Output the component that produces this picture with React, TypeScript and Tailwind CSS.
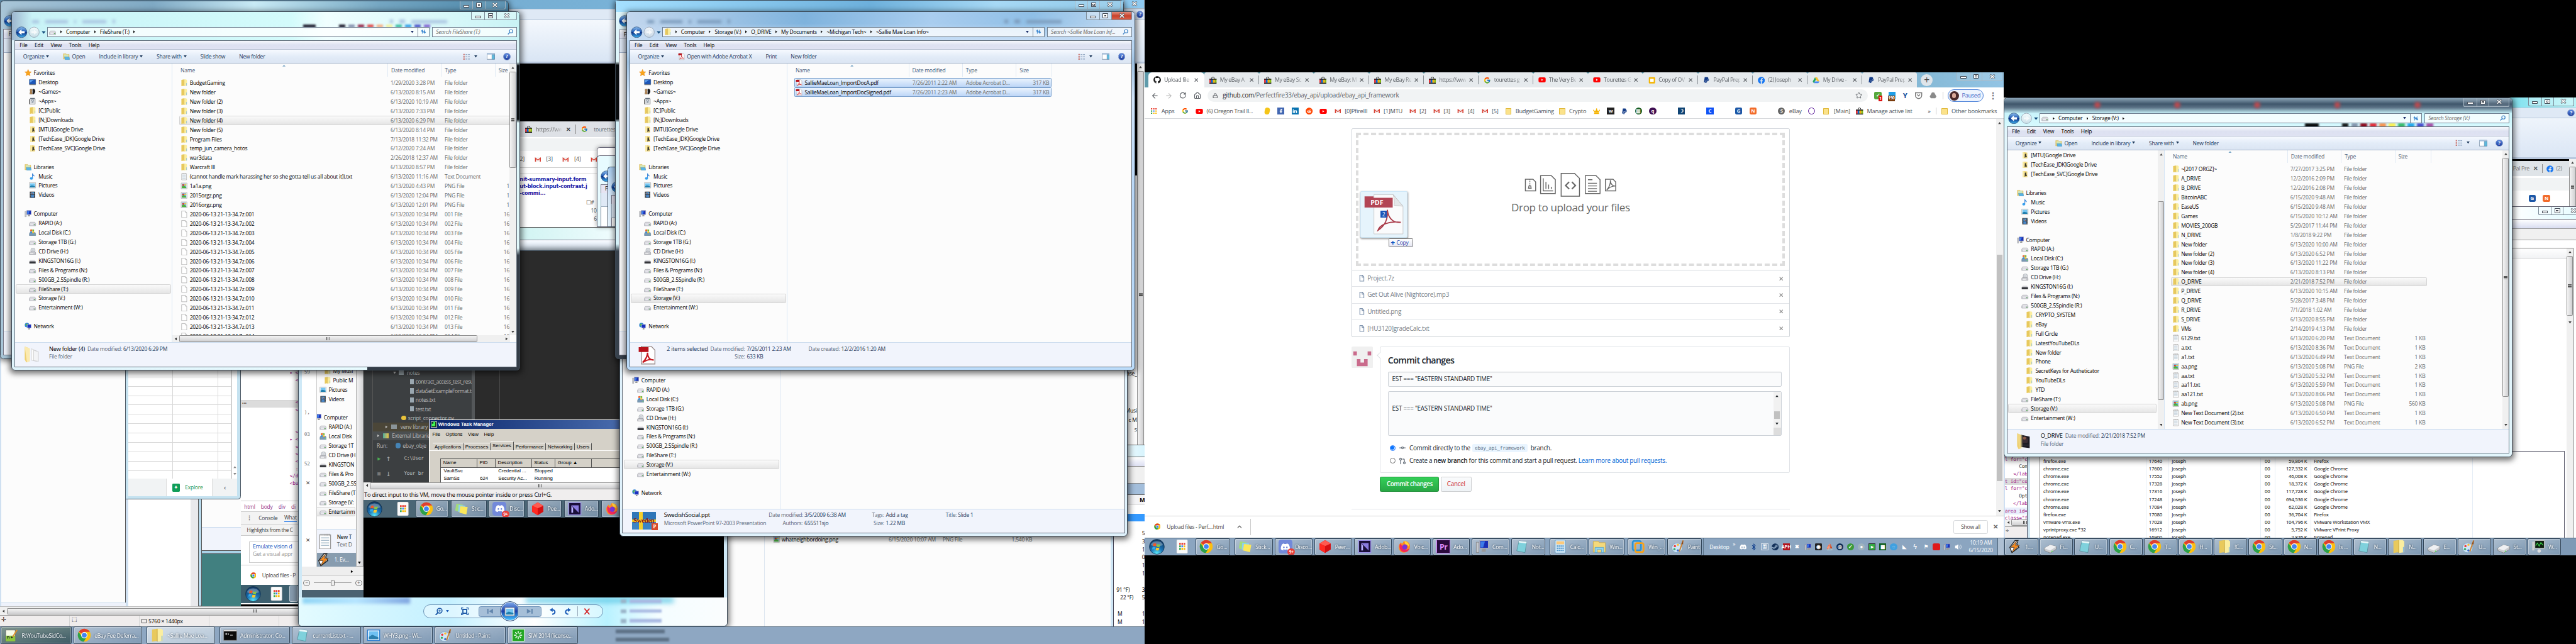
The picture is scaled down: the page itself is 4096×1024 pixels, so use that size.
import type { ReactNode } from "react";
import {
  FaBluetoothB, FaCrown, FaDiscord, FaFacebook, FaFacebookF, FaGithub, FaLinkedinIn,
  FaPaypal, FaReddit, FaSteam, FaYoutube,
} from "react-icons/fa";
import { FcGoogle } from "react-icons/fc";
import { ArrowLeft, ArrowRight, GitCommitHorizontal, GitPullRequest, House, Lock, RotateCw, Star } from "lucide-react";

/* ---------- small icons (16 x 16) ---------- */

type Kind =
  | "folder" | "gdrive" | "drive" | "os" | "cd" | "usb" | "txt" | "png" | "file" | "pdf"
  | "star" | "desktop" | "games" | "apps" | "lib" | "music" | "pics" | "video" | "pc" | "net";

function Svg({ children, className = "size-4" }: { children: ReactNode; className?: string }) {
  return <svg viewBox="0 0 16 16" className={`shrink-0 ${className}`}>{children}</svg>;
}

function Icon({ k, className }: { k: Kind; className?: string }) {
  switch (k) {
    case "folder":
      return <Svg className={className}><path d="M2 1.5 8 .5v14l-6 1z" fill="#e8c95c" /><path d="M8 .5h4.5l2 1.5v12.500l-6 1z" fill="#fbeea0" /><path d="M8 .5v15" stroke="#d2ae3c" strokeWidth=".8" /><path d="M13.500 8.500v6" stroke="#7fb5e0" strokeWidth="1" /></Svg>;
    case "gdrive":
      return <Svg className={className}><path d="M3 1.500h5l5.500 1V15H3z" fill="#efd67a" /><path d="M3 1.500h4v13.500H3z" fill="#f8e9a4" /><path d="M8 5h3v3l2 5-2.500-1-3 2z" fill="#3b3a30" /></Svg>;
    case "drive":
      return <Svg className={className}><path d="M3 6h10l2 3v5H1V9z" fill="#e4e4e8" stroke="#8c8c94" strokeWidth=".8" /><path d="M1.500 9.500h13V14h-13z" fill="#bfc0c8" /><path d="M3 10h7v3H3z" fill="#e8e8ee" /><circle cx="12.500" cy="12" r="1.100" fill="#3fae3a" /></Svg>;
    case "os":
      return <Svg className={className}><path d="M2 8h12l1 3v4H1v-4z" fill="#7899b5" stroke="#56728a" strokeWidth=".7" /><path d="M3 1.500 7 1v4L3 5.500z" fill="#e8602c" /><path d="m7.500 1 4 .5v4l-4-.5z" fill="#78b83a" /><path d="M3 6l4-.4v3.500L3 9.500z" fill="#3a8fd8" /><path d="m7.500 5.600 4 .3v3.600l-4-.4z" fill="#f5c22d" /><circle cx="13" cy="13" r="1" fill="#6cf05a" /></Svg>;
    case "cd":
      return <Svg className={className}><circle cx="9" cy="5.500" r="5" fill="#d9dde2" stroke="#8b8f95" strokeWidth=".7" /><circle cx="9" cy="5.500" r="1.300" fill="#fff" stroke="#8b8f95" strokeWidth=".5" /><path d="M2 9h12l1 2v4H1v-4z" fill="#c6c7cc" stroke="#808088" strokeWidth=".7" /><path d="M3 12h7v1.500H3z" fill="#fff" /></Svg>;
    case "usb":
      return <Svg className={className}><path d="M3 6h10l2 3v5H1V9z" fill="#dcdce0" /><path d="M1 9.500h14V14H1z" fill="#34353a" /><path d="M3 9h10" stroke="#8a8a92" /></Svg>;
    case "txt":
      return <Svg className={className}><path d="M2.500 1.500h11v14h-11z" fill="#fdfdfd" stroke="#9a9a9a" strokeWidth=".8" /><path d="M4 4.500h8M4 7h8M4 9.500h8M4 12h8" stroke="#a9bdcc" strokeWidth="1" /><path d="M4 .5v2M6 .5v2M8 .5v2M10 .5v2M12 .5v2" stroke="#888" strokeWidth=".7" /></Svg>;
    case "png":
      return <Svg className={className}><path d="M1.500 1.500h13v13h-13z" fill="#fff" stroke="#8a8a8a" strokeWidth=".8" /><path d="M3 3h10v10H3z" fill="#6fb6ea" /><path d="M3 9l4-2 6 4v2H3z" fill="#4fae3d" /><circle cx="6" cy="6" r="2" fill="#e5392b" /><path d="M9 4h4v3H9z" fill="#f2d13c" /></Svg>;
    case "file":
      return <Svg className={className}><path d="M2.500.8h8.200L14 4v11.200H2.500z" fill="#fff" stroke="#8c8c8c" strokeWidth=".8" /><path d="M10.500.8V4H14" fill="#eee" stroke="#8c8c8c" strokeWidth=".6" /></Svg>;
    case "pdf":
      return <Svg className={className}><path d="M3 .8h8L14 4v11.200H3z" fill="#fff" stroke="#9a8c8c" strokeWidth=".7" /><path d="M.8 1.500h8v4h-8z" fill="#b8121b" /><path d="M4 14c2-2 4-5 4-8 0 4 2 6 5 6-3-1-6 0-9 2z" fill="none" stroke="#c5161d" strokeWidth="1.100" /></Svg>;
    case "star":
      return <Svg className={className}><path d="m8 .5 2.200 5 5.300.5-4 3.600 1.200 5.400L8 12.200 3.300 15l1.200-5.400L.5 6l5.300-.5z" fill="#f9a41c" stroke="#e27d0b" strokeWidth=".6" /></Svg>;
    case "desktop":
      return <Svg className={className}><path d="M1 2h14v11H1z" fill="#1d56b8" stroke="#24406f" strokeWidth=".8" /><path d="M2 3h9L2 9z" fill="#5da0ee" /><path d="M1 13h14v1.500H1z" fill="#777" /></Svg>;
    case "games":
      return <Svg className={className}><path d="M8 2c4-1 7 2 6 7l-3 5H8z" fill="#1c1c1e" /><path d="M4 2.500a2.200 2.200 0 1 1 2 4l1.500 7H2l1.300-7A2.200 2.200 0 0 1 4 2.500z" fill="#b88a55" stroke="#5a3d20" strokeWidth=".7" /></Svg>;
    case "apps":
      return <Svg className={className}><path d="M2 3h12v12H2z" fill="#dcdfe3" stroke="#777" strokeWidth=".8" /><path d="M3 1h10v2H3z" fill="#5d6a78" /><path d="M5 5h6v7H5z" fill="#8d99a6" /><path d="m5 12 3-6 3 6" fill="none" stroke="#fff" /><path d="M1 4v11" stroke="#333" strokeWidth="1.200" /></Svg>;
    case "lib":
      return <Svg className={className}><path d="M1 2h6l1 1.500h6V14H1z" fill="#efd67a" stroke="#c9a945" strokeWidth=".6" /><path d="M3 4h9v5H3z" fill="#cfe6c0" /><path d="M3.500 9h10.500l1 6H5z" fill="#58b3e6" stroke="#2f87bb" strokeWidth=".6" /></Svg>;
    case "music":
      return <Svg className={className}><path d="M8 1v11" stroke="#1c6fd0" strokeWidth="1.400" /><ellipse cx="5.500" cy="12.300" rx="3.400" ry="2.800" fill="#37a0ee" /><path d="M8 1c.5 3 5 3 4.500 7.500C12 6 9 6 8 5.500z" fill="#2f7fd6" /></Svg>;
    case "pics":
      return <Svg className={className}><path d="M1 2h14v12H1z" fill="#fff" stroke="#8d8d8d" strokeWidth=".8" /><path d="M2.500 3.500h11v9h-11z" fill="#77c6f1" /><path d="m2.500 10 4-2 7 2v2.500h-11z" fill="#1f7fae" /></Svg>;
    case "video":
      return <Svg className={className}><path d="M2 1h12v14H2z" fill="#23262b" /><path d="M4.500 2h7v5.500h-7z" fill="#4f9ad6" /><path d="M4.500 8.500h7V14h-7z" fill="#4b87c6" /><path d="m5 3 5 4" stroke="#c4502f" strokeWidth="1.300" /><path d="M3.200 2v12M12.800 2v12" stroke="#e6e6e6" strokeWidth="1" strokeDasharray="1 1.200" /></Svg>;
    case "pc":
      return <Svg className={className}><path d="M5 1h10v9H5z" fill="#1b2fb5" stroke="#aab" strokeWidth="1" /><path d="M6 2h5l-2 7H6z" fill="#3d7be8" /><path d="M1 3h3v12H1z" fill="#c5c9d0" stroke="#777" strokeWidth=".5" /><path d="M8 10.500h4V14H7z" fill="#999" /></Svg>;
    case "net":
      return <Svg className={className}><circle cx="5.500" cy="5.500" r="5" fill="#2c80d8" /><path d="M2 4c2-3 4-2 5-1S4 6 3 8z" fill="#57b84a" /><path d="M6 4h9v8H6z" fill="#1a2fc0" stroke="#c9ccd4" /><path d="M9 12.500h3V15H8z" fill="#8a8a8a" /></Svg>;
  }
}

/* open folder used in the details panes; the papers inside can be white or a dark picture */
function BigFolder({ dark = false }: { dark?: boolean }) {
  return (
    <svg viewBox="0 0 46 46" className="mt-[3px] ml-[18px] h-[46px] w-[38px] shrink-0">
      <path d="M4 2 14 6v36l-6 3-4-8z" fill="#efd071" />
      {dark ? (
        <><path d="m14 6 24 5v31l-24-3z" fill="#1c1a22" /><path d="M18 12h12l4 8-2 8H20z" fill="#3a2c33" /><circle cx="24" cy="15" r="4" fill="#8a5a4a" /><path d="M16 34h20" stroke="#4a4d58" /></>
      ) : (
        <><path d="m22 8 14 6v28l-14-3z" fill="#fdfdfd" stroke="#bbb" /><path d="m28 12 13 4v26l-13-2z" fill="#f3f4f6" stroke="#bbb" /></>
      )}
      <path d="m4 2 14 5v35l-8 3z" fill={dark ? "#f3dc90" : "#fbeab0"} opacity={dark ? "0.55" : "1"} />
    </svg>
  );
}

function Chrome({ className = "size-8" }: { className?: string }) {
  return (
    <svg viewBox="0 0 32 32" className={`shrink-0 ${className}`}>
      <circle cx="16" cy="16" r="15" fill="#fbbf12" />
      <path d="M16 16 3.500 8A15 15 0 0 1 29 8.500H16z" fill="#df3e30" />
      <path d="M3 8.500A15 15 0 0 0 15 31l7-12-6-3-6 3z" fill="#2ca14b" />
      <circle cx="16" cy="16" r="7.200" fill="#fff" />
      <circle cx="16" cy="16" r="5.600" fill="#4184f3" />
    </svg>
  );
}

function Ebay() {
  return (
    <svg viewBox="0 0 16 16" className="size-4 shrink-0">
      <path d="M5 5V3.500a3 2.800 0 0 1 6 0V5" fill="none" stroke="#111" strokeWidth="1.200" />
      <path d="M0 4.500h16V7H0zM0 13h16v2.500H0z" fill="#111" />
      <path d="M0 6.500h4v7H0z" fill="#e53238" /><path d="M4 6.500h4v7H4z" fill="#0064d2" /><path d="M8 6.500h4v7H8z" fill="#f5af02" /><path d="M12 6.500h4v7h-4z" fill="#86b817" />
    </svg>
  );
}

function Gmail() {
  return <svg viewBox="0 0 16 16" className="size-[15px] shrink-0"><path d="M1 3h14v10.500H1z" fill="#f4f4f4" /><path d="M1 13.500V3l7 5.500L15 3v10.500h-2.500V7.500L8 11 3.500 7.500v6z" fill="#d94235" /></svg>;
}

function GDrive() {
  return <svg viewBox="0 0 16 16" className="size-4 shrink-0"><path d="M5.500 1.500h5l5 9h-5z" fill="#fbc02d" /><path d="m5.500 1.500 2.500 4.500-5 8.500-2.500-4z" fill="#1fa463" /><path d="M5.500 10.500h10l-2.500 4H3z" fill="#4688f4" /></svg>;
}

function Slides() {
  return <svg viewBox="0 0 16 16" className="size-4 shrink-0"><rect x="1" y="1" width="14" height="14" rx="1.500" fill="#f4b400" /><path d="M4 4.500h8v7H4z" fill="#fff" /></svg>;
}

function Tri({ className = "" }: { className?: string }) {
  return <svg viewBox="0 0 8 6" className={`h-[5px] w-[7px] shrink-0 ${className}`}><path d="M0 0h8L4 6z" fill="currentColor" /></svg>;
}

function Crumb() {
  return <svg viewBox="0 0 5 8" className="h-[7px] w-[4px] shrink-0"><path d="m0 0 5 4-5 4z" fill="#111" /></svg>;
}

function Orb({ className = "size-[35px]" }: { className?: string }) {
  return (
    <svg viewBox="0 0 36 36" className={`shrink-0 ${className}`}>
      <defs><radialGradient id="orb" cx=".5" cy=".95" r=".9"><stop offset="0" stopColor="#5ff0ff" /><stop offset=".45" stopColor="#1b72b4" /><stop offset="1" stopColor="#143a63" /></radialGradient></defs>
      <circle cx="18" cy="18" r="17.200" fill="url(#orb)" stroke="#0f2a45" />
      <path d="M4 14a14.500 12 0 0 1 28 0c-8 3-20 3-28 0z" fill="#fff" opacity=".3" />
      <path d="M10 11c3-1.600 5-1.400 7 .2l-1.500 6c-2-1.400-4-1.600-6.800-.2z" fill="#f0592a" />
      <path d="M18.500 11.800c2.500 1.400 5 1.400 7.500.2l-1.600 6c-2.600 1.200-4.800 1-7.200-.3z" fill="#8cc63e" />
      <path d="M8.300 18.500c2.600-1.300 4.800-1.200 6.800.2l-1.500 6c-2-1.400-4.200-1.500-6.800-.3z" fill="#35a8e8" />
      <path d="M16.700 19.400c2.400 1.300 4.800 1.400 7.300.2l-1.600 6c-2.500 1.200-4.900 1-7.200-.2z" fill="#fdc72e" />
    </svg>
  );
}

/* ---------- window chrome ---------- */

function Caption({ tone = "light", className = "" }: { tone?: "light" | "red" | "dark"; className?: string }) {
  const line = tone === "dark" ? "border-[#a9b8c4]" : "border-[#7d8c99]";
  const body = tone === "light" ? "bg-white/25" : tone === "dark" ? "bg-white/10" : "bg-white/30";
  return (
    <div className={`flex h-[19px] w-[103px] shrink-0 overflow-hidden rounded-b-[4px] border border-t-0 ${line} ${body} ${className}`}>
      <div className={`flex w-[29px] items-center justify-center border-r ${line}`}>
        <i className="mt-[5px] h-[5px] w-[13px] rounded-[1px] border border-[#444b55] bg-white" />
      </div>
      <div className={`flex w-[27px] items-center justify-center border-r ${line}`}>
        <i className="flex h-[10px] w-[12px] items-center justify-center rounded-[1px] border border-[#444b55] bg-white"><b className="h-[4px] w-[5px] border border-[#444b55]" /></i>
      </div>
      <div className={`flex flex-1 items-center justify-center ${tone === "red" ? "bg-linear-to-b from-[#e08f80] via-[#c9412b] to-[#d8604a]" : ""}`}>
        <svg viewBox="0 0 14 11" className="h-[11px] w-[14px]"><path d="m2 1 10 9M12 1 2 10" stroke="#444b55" strokeWidth="4" /><path d="m2.500 1.500 9 8M11.500 1.500l-9 8" stroke="#fff" strokeWidth="2.200" /></svg>
      </div>
    </div>
  );
}

function BackForward() {
  return (
    <svg viewBox="0 0 70 26" className="h-[26px] w-[70px] shrink-0">
      <defs>
        <linearGradient id="bk" x1="0" y1="0" x2="0" y2="1"><stop offset="0" stopColor="#8fc0f0" /><stop offset=".48" stopColor="#1b55b0" /><stop offset=".52" stopColor="#0a2f86" /><stop offset="1" stopColor="#3fb5f2" /></linearGradient>
        <linearGradient id="fw" x1="0" y1="0" x2="0" y2="1"><stop offset="0" stopColor="#fff" stopOpacity=".8" /><stop offset="1" stopColor="#c9d6e0" stopOpacity=".7" /></linearGradient>
      </defs>
      <circle cx="13" cy="13" r="12" fill="url(#bk)" stroke="#2a4b78" />
      <path d="m6 13 7-6.500v4h7v5h-7v4z" fill="#fff" />
      <circle cx="41" cy="13" r="11.500" fill="url(#fw)" stroke="#8796a6" />
      <path d="m48 13-7-5.500v3.500h-6v4h6v3.500z" fill="#fff" opacity=".7" />
      <path d="M58 11h9l-4.500 5.500z" fill="#16507f" />
    </svg>
  );
}

/* address bar of the window behind, seen through the glass */
function GhostBar({ className = "" }: { className?: string }) {
  return (
    <div className={`flex items-center gap-[14px] blur-[3px] ${className}`}>
      <i className="h-[7px] w-[16px] bg-current" /><i className="h-[7px] w-[50px] bg-current" /><i className="h-[7px] w-[5px] bg-current" /><i className="h-[7px] w-[54px] bg-current" /><i className="h-[8px] w-[5px] bg-current" />
      <i className="ml-[600px] h-[8px] w-[8px] bg-current" /><i className="h-[9px] w-[12px] bg-current" /><i className="h-[7px] w-[80px] bg-current" />
    </div>
  );
}

type NavItem = [Kind, string, 0 | 1 | 2] | null;

const favorites: NavItem[] = [
  ["star", "Favorites", 0], ["desktop", "Desktop", 1], ["games", "~Games~", 1], ["apps", "~Apps~", 1],
  ["folder", "[C;]Public", 1], ["folder", "[N;]Downloads", 1],
];
const drivesFolders: NavItem[] = [
  ["gdrive", "[MTU]Google Drive", 1], ["gdrive", "[TechEase_JDK]Google Drive", 1], ["gdrive", "[TechEase_SVC]Google Drive", 1],
];
const libraries: NavItem[] = [["lib", "Libraries", 0], ["music", "Music", 1], ["pics", "Pictures", 1], ["video", "Videos", 1]];
const computer: NavItem[] = [
  ["pc", "Computer", 0], ["drive", "RAPID (A:)", 1], ["os", "Local Disk (C:)", 1], ["drive", "Storage 1TB (G:)", 1],
  ["cd", "CD Drive (H:)", 1], ["usb", "KINGSTON16G (I:)", 1], ["drive", "Files & Programs (N:)", 1], ["drive", "500GB_2.5Spindle (R:)", 1],
];
const tail: NavItem[] = [["drive", "FileShare (T:)", 1], ["drive", "Storage (V:)", 1], ["drive", "Entertainment (W:)", 1]];
const network: NavItem[] = [null, ["net", "Network", 0]];
const fullNav: NavItem[] = [...favorites, ...drivesFolders, null, ...libraries, null, ...computer, ...tail, ...network];
const subfolders: NavItem[] = ["CRYPTO_SYSTEM", "eBay", "Full Circle", "LatestYouTubeDLs", "New folder", "Phone", "SecretKeys for Autheticator", "YouTubeDLs", "YTD"].map((n) => ["folder", n, 2]);
const deepNav: NavItem[] = [...drivesFolders, null, ...libraries, null, ...computer, ...subfolders, ...tail];

function NavList({ items, selected }: { items: NavItem[]; selected: string }) {
  return (
    <ul className="flex flex-col">
      {items.map((it, i) =>
        it === null ? <li key={i} className="h-[21px]" /> : (
          <li key={i} className={`mx-[2px] flex h-[21px] shrink-0 items-center gap-[5px] rounded-[3px] border ${it[1] === selected ? "border-[#d5d5d5] bg-linear-to-b from-[#fafafa] to-[#e5e5e5]" : "border-transparent"} ${it[2] === 0 ? "pl-[17px]" : it[2] === 1 ? "pl-[28px]" : "pl-[38px]"}`}>
            <Icon k={it[0]} /><span>{it[1]}</span>
          </li>
        ),
      )}
    </ul>
  );
}

function Menu() {
  return (
    <div className="flex h-[21px] shrink-0 items-center gap-[16px] border-b border-[#b3bccf] bg-linear-to-b from-[#f6f8fc] via-[#dde1f1] to-[#dfe2f2] pl-[10px]">
      {["File", "Edit", "View", "Tools", "Help"].map((m) => <span key={m}>{m}</span>)}
    </div>
  );
}

function HelpDot({ className = "size-[16px]" }: { className?: string }) {
  return <span className={`flex shrink-0 items-center justify-center rounded-full border border-[#7c94c8] bg-linear-to-b from-[#5a87e0] to-[#1c3b9c] text-[11px] font-bold text-white ${className}`}>?</span>;
}

function Toolbar({ children }: { children: ReactNode }) {
  return (
    <div className="flex h-[31px] shrink-0 items-center border-b border-[#a4b4cb] bg-linear-to-b from-[#f7faff] via-[#e3ecf8] to-[#dbe5f3] pr-[14px] pl-[18px] text-[#1e395b]">
      <div className="flex flex-1 items-center">{children}</div>
      <svg viewBox="0 0 18 14" className="mr-[7px] h-[14px] w-[18px]"><path d="M1 1h3v3H1zM1 6h3v3H1zM1 11h3v3H1z" fill="#c9706a" /><path d="M6 2.500h4m1.500 0h4M6 7.500h4m1.500 0h4M6 12.500h4m1.500 0h4" stroke="#5e7ba0" strokeWidth="1.200" /></svg>
      <Tri className="mr-[21px]" />
      <svg viewBox="0 0 18 16" className="mr-[19px] h-[16px] w-[18px]"><path d="M.5 1.500h17v13H.5z" fill="#fff" stroke="#5b7896" /><path d="M.5 1h17v3H.5z" fill="#a6c0dc" /><path d="M11.500 4h6v10.500h-6z" fill="#5db9dd" stroke="#5b7896" strokeWidth=".6" /></svg>
      <HelpDot />
    </div>
  );
}

function VScroll({ thumb, className = "" }: { thumb: string; className?: string }) {
  return (
    <div className={`flex w-[15px] shrink-0 flex-col items-center bg-[#f0f0f0] ${className}`}>
      <Tri className="mt-[6px] mb-[6px] rotate-180 text-[#444]" />
      <div className={`flex w-[15px] flex-col items-center justify-center gap-[1px] rounded-[2px] border border-[#8e8e8e] bg-linear-to-r from-[#f4f4f4] to-[#cfcfd1] ${thumb}`}>
        <i className="h-px w-[8px] bg-[#555]" /><i className="h-px w-[8px] bg-[#555]" /><i className="h-px w-[8px] bg-[#555]" /><i className="h-px w-[8px] bg-[#555]" />
      </div>
      <div className="flex-1" />
      <Tri className="mb-[6px] text-[#444]" />
    </div>
  );
}

function HScroll({ thumb }: { thumb: string }) {
  return (
    <div className="flex h-[15px] shrink-0 items-center bg-[#f0f0f0] px-[4px]">
      <Tri className="mr-[4px] rotate-90 text-[#333]" />
      <div className={`flex h-[15px] items-center justify-center gap-[2px] rounded-[2px] border border-[#8e8e8e] bg-linear-to-b from-[#f4f4f4] to-[#cfcfd1] ${thumb}`}>
        <i className="h-[7px] w-px bg-[#555]" /><i className="h-[7px] w-px bg-[#555]" /><i className="h-[7px] w-px bg-[#555]" />
      </div>
      <div className="flex-1" />
      <Tri className="-rotate-90 text-[#333]" />
    </div>
  );
}

type FileRow = [Kind, string, string, string, string?];

function FileList({ rows, cols, head, selected, tone = "grey", widths }: {
  rows: FileRow[]; cols: string; head: string; selected: string[]; tone?: "grey" | "blue"; widths: string;
}) {
  const pick = tone === "blue" ? "border-[#7da2ce] bg-linear-to-b from-[#eaf3fd] to-[#bdd6f7]" : "border-[#d5d5d5] bg-linear-to-b from-[#fafafa] to-[#e5e5e5]";
  return (
    <div className="flex min-w-0 flex-1 flex-col overflow-hidden">
      <div className={`relative grid h-[29px] shrink-0 text-[#4c607a] ${head}`}>
        {["Name", "Date modified", "Type", "Size"].map((h) => (
          <div key={h} className="relative flex items-center border-r border-[#e1eaf4] pl-[7px]">
            {h}
            {h === "Name" && <i className="absolute top-[2px] left-1/2 h-[4px] w-[7px] bg-[#7fa9c8] [clip-path:polygon(50%_0,100%_100%,0_100%)]" />}
          </div>
        ))}
      </div>
      <div className={`mt-[3px] flex min-h-0 flex-1 flex-col overflow-hidden ${widths}`}>
        {rows.map((r, i) => (
          <div key={i} className={`grid h-[21px] shrink-0 items-center rounded-[2px] border ${selected.includes(r[1]) ? pick : "border-transparent"} ${cols}`}>
            <span className="flex items-center gap-[4px] pl-[2px]"><Icon k={r[0]} />{r[1]}</span>
            <span className="text-[#6d6d6d]">{r[2]}</span>
            <span className="text-[#6d6d6d]">{r[3]}</span>
            <span className="pr-[4px] text-right text-[#6d6d6d]">{r[4]}</span>
          </div>
        ))}
      </div>
    </div>
  );
}

function Explorer({ className, caption, back, crumbs, drive, search, searchW, tools, nav, body, details }: {
  className: string; caption?: "light" | "red" | "dark"; back?: ReactNode; crumbs: string[]; drive: Kind; search: string; searchW: string;
  tools: ReactNode; nav: ReactNode; body: ReactNode; details: ReactNode;
}) {
  return (
    <section className={`absolute flex flex-col overflow-hidden rounded-[8px] border border-[#3a4652] px-[5px] pb-[6px] shadow-[0_3px_14px_3px_rgba(0,0,0,0.55)] ${className}`}>
      {back}
      <div className="relative flex h-[19px] shrink-0 justify-end"><Caption tone={caption} /></div>
      <div className="relative mt-[13px] flex h-[26px] shrink-0 items-center pl-[3px]">
        <BackForward />
        <div className="flex h-[22px] flex-1 items-center gap-[9px] border border-[#6f7f90] bg-white/75 pl-[3px]">
          <Icon k={drive} />
          <Crumb />
          {crumbs.map((c) => (
            <span key={c} className="flex items-center gap-[9px]"><span>{c}</span>{(c !== crumbs[crumbs.length - 1] || drive === "drive") && <Crumb />}</span>
          ))}
          <div className="flex-1" />
          <Tri className="text-[#1c2f6a]" />
          <div className="flex h-full w-[25px] items-center justify-center border-l border-[#6f7f90]">
            <svg viewBox="0 0 16 16" className="size-[15px]"><path d="M5 13V7h3M2.500 7 5 3.500 7.500 7zM11 3v6H8M8.500 9l2.500 3.500L13.500 9z" fill="#3a86d0" stroke="#3a86d0" strokeWidth="1" /></svg>
          </div>
        </div>
        <div className={`ml-[6px] flex h-[22px] items-center justify-between border border-[#6f7f90] bg-white/75 px-[7px] text-[#6a6a6a] italic ${searchW}`}>
          {search}
          <svg viewBox="0 0 14 14" className="size-[13px]"><circle cx="8.500" cy="5.500" r="4" fill="none" stroke="#3f82c4" strokeWidth="1.800" /><path d="M5.500 8.500 1 13" stroke="#3f82c4" strokeWidth="2" /></svg>
        </div>
      </div>
      <div className="relative mt-[5px] flex min-h-0 flex-1 flex-col border border-[#5f6b78] bg-[#fcfcfc]">
        <Menu />
        <Toolbar>{tools}</Toolbar>
        <div className="flex min-h-0 flex-1">{nav}{body}</div>
        <div className="flex h-[54px] shrink-0 border-t-2 border-[#cbdcee] bg-[#f1f4fc]">{details}</div>
      </div>
    </section>
  );
}

function Tool({ children, className = "mr-[31px]" }: { children: ReactNode; className?: string }) {
  return <span className={`flex items-center gap-[4px] ${className}`}>{children}</span>;
}

const fileShareRows: FileRow[] = [
  ["folder", "BudgetGaming", "1/29/2020 3:28 PM", "File folder"],
  ["folder", "New folder", "6/13/2020 8:15 AM", "File folder"],
  ["folder", "New folder (2)", "6/13/2020 10:19 AM", "File folder"],
  ["folder", "New folder (3)", "6/13/2020 7:33 PM", "File folder"],
  ["folder", "New folder (4)", "6/13/2020 6:29 PM", "File folder"],
  ["folder", "New folder (5)", "6/13/2020 8:14 PM", "File folder"],
  ["folder", "Program Files", "7/13/2018 11:32 PM", "File folder"],
  ["folder", "temp_jun_camera_hotos", "6/12/2020 7:24 AM", "File folder"],
  ["folder", "war3data", "2/26/2018 12:37 AM", "File folder"],
  ["folder", "Warcraft III", "6/13/2020 8:57 PM", "File folder"],
  ["txt", "(cannot handle mark harassing her so she gotta tell us all about it)).txt", "6/13/2020 11:16 AM", "Text Document"],
  ["png", "1a1a.png", "6/13/2020 4:43 PM", "PNG File", "1"],
  ["png", "2015orgz.png", "6/13/2020 12:04 PM", "PNG File", "1"],
  ["png", "2016orgz.png", "6/13/2020 12:01 PM", "PNG File", "1"],
  ...Array.from({ length: 14 }, (_, i): FileRow => {
    const n = String(i + 1).padStart(3, "0");
    return ["file", `2020-06-13 21-13-34.7z.${n}`, "6/13/2020 10:34 PM", `${n} File`, "16"];
  }),
];

const storageRows: FileRow[] = [
  ["folder", "~[2017 ORGZ]~", "7/27/2017 3:25 PM", "File folder"],
  ["folder", "A_DRIVE", "12/2/2016 2:09 PM", "File folder"],
  ["folder", "B_DRIVE", "12/2/2016 2:08 PM", "File folder"],
  ["folder", "BitcoinABC", "6/15/2020 9:48 AM", "File folder"],
  ["folder", "EaseUS", "6/15/2020 9:48 AM", "File folder"],
  ["folder", "Games", "6/15/2020 10:12 AM", "File folder"],
  ["folder", "MOVIES_200GB", "5/29/2017 11:44 PM", "File folder"],
  ["folder", "N_DRIVE", "1/8/2018 9:22 PM", "File folder"],
  ["folder", "New folder", "6/13/2020 10:00 AM", "File folder"],
  ["folder", "New folder (2)", "6/13/2020 6:52 PM", "File folder"],
  ["folder", "New folder (3)", "6/13/2020 11:22 PM", "File folder"],
  ["folder", "New folder (4)", "6/13/2020 8:13 PM", "File folder"],
  ["folder", "O_DRIVE", "2/21/2018 7:52 PM", "File folder"],
  ["folder", "P_DRIVE", "6/13/2020 10:15 AM", "File folder"],
  ["folder", "Q_DRIVE", "5/28/2017 3:48 PM", "File folder"],
  ["folder", "R_DRIVE", "7/1/2018 1:02 AM", "File folder"],
  ["folder", "S_DRIVE", "6/13/2020 8:55 PM", "File folder"],
  ["folder", "VMs", "2/14/2019 4:13 PM", "File folder"],
  ["txt", "6129.txt", "6/13/2020 6:20 PM", "Text Document", "1 KB"],
  ["txt", "a.txt", "6/13/2020 8:36 PM", "Text Document", "1 KB"],
  ["txt", "a1.txt", "6/13/2020 6:49 PM", "Text Document", "1 KB"],
  ["png", "aa.png", "6/13/2020 5:08 PM", "PNG File", "2 KB"],
  ["txt", "aa.txt", "6/13/2020 5:32 PM", "Text Document", "1 KB"],
  ["txt", "aa11.txt", "6/13/2020 5:59 PM", "Text Document", "1 KB"],
  ["txt", "aa121.txt", "6/13/2020 8:06 PM", "Text Document", "1 KB"],
  ["png", "ab.png", "6/13/2020 5:08 PM", "PNG File", "560 KB"],
  ["txt", "New Text Document (2).txt", "6/13/2020 6:50 PM", "Text Document", "1 KB"],
  ["txt", "New Text Document (3).txt", "6/13/2020 6:52 PM", "Text Document", "1 KB"],
];

/* ---------- taskbar ---------- */

type App =
  | "npp" | "chrome" | "folder" | "cmd" | "notepad" | "photo" | "paint" | "siw" | "sticky" | "discord" | "gem"
  | "media" | "firefox" | "pr" | "pc" | "calc" | "files" | "vmware" | "winamp" | "drive" | "taskmgr";

function AppIcon({ a }: { a: App }) {
  const c = "size-[31px] shrink-0";
  switch (a) {
    case "chrome": return <Chrome className={c} />;
    case "folder": return <Icon k="folder" className={c} />;
    case "pc": return <Icon k="pc" className={c} />;
    case "npp": return <svg viewBox="0 0 32 32" className={c}><path d="M3 4h22v26H3z" fill="#f7fbe8" stroke="#555" /><path d="M3 17h22v13H3z" fill="#8cc63f" /><path d="M29 4 19 20" stroke="#e0902a" strokeWidth="3" /><path d="M7 24v-6m0 2c3-3 4 0 4 4m4-3h4m-2-2v4" stroke="#222" strokeWidth="1.500" fill="none" /></svg>;
    case "cmd": return <svg viewBox="0 0 32 32" className={c}><path d="M1 4h30v24H1z" fill="#0a0a0a" stroke="#999" /><path d="M1 4h30v3H1z" fill="#dcdcdc" /><path d="M5 12h4M5 15h4m3-3v3m4 1h6" stroke="#eee" strokeWidth="1.600" /></svg>;
    case "notepad": return <svg viewBox="0 0 32 32" className={c}><path d="m9 3 18 2-4 25L4 26z" fill="#7fd1dc" stroke="#4a8690" /><path d="m9 3 18 2-.8 4L8.200 6.500z" fill="#e9f6f8" /></svg>;
    case "photo": return <svg viewBox="0 0 32 32" className={c}><path d="M2 4h28v24H2z" fill="#fff" stroke="#2f7fd0" strokeWidth="2" /><path d="M5 7h22v18H5z" fill="#6fc1f3" /><path d="m5 20 8-5 14 6v4H5z" fill="#2b7fae" /></svg>;
    case "paint": return <svg viewBox="0 0 32 32" className={c}><ellipse cx="14" cy="19" rx="12" ry="11" fill="#cfe5f5" stroke="#6f9dbf" /><circle cx="9" cy="15" r="2.500" fill="#e33" /><circle cx="16" cy="12" r="2.500" fill="#fb3" /><circle cx="8" cy="22" r="2.500" fill="#3a6" /><circle cx="16" cy="25" r="2.500" fill="#36c" /><path d="M28 2 19 28" stroke="#c98338" strokeWidth="3" /><path d="m28 1-4 9 4 1z" fill="#8a4b1f" /></svg>;
    case "siw": return <svg viewBox="0 0 32 32" className={c}><rect x="2" y="2" width="28" height="28" fill="#23a623" stroke="#bfe8bf" strokeWidth="2" /><path d="M16 6v20M6 16h20M9 9l14 14M23 9 9 23" stroke="#fff" strokeWidth="2" strokeDasharray="6 7" /></svg>;
    case "sticky": return <svg viewBox="0 0 32 32" className={c}><path d="m4 4 16 3-4 18L1 20z" fill="#a4dc7a" /><path d="m9 7 16 2-3 18-14-4z" fill="#8cd0f0" /><path d="m13 10 17 2-3 17-16-4z" fill="#fbe75a" /></svg>;
    case "discord": return <span className={`relative flex items-center justify-center rounded-[6px] bg-[#7289da] text-white ${c}`}><FaDiscord size={22} /><b className="absolute -right-[6px] -bottom-[4px] flex size-[16px] items-center justify-center rounded-full bg-[#e8413c] text-[9px]">9+</b></span>;
    case "gem": return <svg viewBox="0 0 32 32" className={c}><path d="m16 1 13 8v14l-13 8L3 23V9z" fill="#d40f12" /><path d="m16 1 13 8-13 6L3 9z" fill="#ff5a50" /><path d="M16 15v16L3 23V9z" fill="#ff2a22" /></svg>;
    case "media": return <svg viewBox="0 0 32 32" className={c}><path d="M2 2h28v28H2z" fill="#1a0f3a" stroke="#9b8fe6" strokeWidth="2" /><path d="M8 8h17v17z" fill="#8a7be0" /><path d="M8 8v17h4V14z" fill="#b9b0ff" /></svg>;
    case "firefox": return <svg viewBox="0 0 32 32" className={c}><path d="M16 3c9 1 14 7 13 14S22 30 15 30 2 25 3 15c1-4 3-6 5-9 1 2 2 3 4 3 1-3 2-5 4-6z" fill="#ff8a1f" /><path d="M6 9c-3 8 0 19 10 20 6 0 11-4 12-9-3 4-16 5-16-4z" fill="#f5265c" /><circle cx="17" cy="17" r="6" fill="#7a35d8" /><path d="M16 3c8 2 12 7 10 13-2-4-5-4-8-6z" fill="#ffd43a" /></svg>;
    case "pr": return <span className={`flex items-center justify-center rounded-[2px] border-2 border-[#d873ff] bg-[#2a0a3c] text-[17px] font-bold text-[#e38cff] ${c}`}>Pr</span>;
    case "calc": return <svg viewBox="0 0 32 32" className={c}><rect x="4" y="1" width="24" height="30" rx="2" fill="#cfe6f6" stroke="#4c8bb8" /><path d="M7 4h18v7H7z" fill="#fdc97a" /><path d="M8 15h16M8 20h16M8 25h16" stroke="#4b93c8" strokeWidth="3" strokeDasharray="3 1.300" /></svg>;
    case "files": return <svg viewBox="0 0 32 32" className={c}><path d="M2 4h12l2 3h14v22H2z" fill="#f4d97b" stroke="#c8a23f" /><path d="M6 18h20v12h-5v-7H11v7H6z" fill="#8fd4f2" stroke="#4b9cc8" /></svg>;
    case "vmware": return <svg viewBox="0 0 32 32" className={c}><rect x="3" y="3" width="19" height="22" rx="4" fill="none" stroke="#2b94d8" strokeWidth="4" /><rect x="9" y="8" width="19" height="21" rx="4" fill="none" stroke="#f7a11a" strokeWidth="4" /></svg>;
    case "winamp": return <svg viewBox="0 0 32 32" className={c}><path d="M16 2 4 18l5 12 16-12-5-8 3-8z" fill="#fff" stroke="#222" strokeWidth="2" /><path d="M20 2 6 18h8L9 30l17-17h-9z" fill="#f58a1f" stroke="#222" /></svg>;
    case "drive": return <svg viewBox="0 0 32 32" className={c}><path d="m2 20 14-8 14 4v6l-14 9-14-6z" fill="#c9ccd0" stroke="#777" /><path d="m2 20 14-8 14 4-14 9z" fill="#eff0f2" /><circle cx="20" cy="27" r="1.500" fill="#5e5" /></svg>;
    case "taskmgr": return <svg viewBox="0 0 32 32" className={c}><path d="M8 2h22v18H8z" fill="#0f1f10" stroke="#bbb" strokeWidth="2" /><path d="m10 14 4-6 4 7 4-8 5 6" fill="none" stroke="#3be04a" strokeWidth="1.600" /><path d="M2 5h5v20H2z" fill="#d0d0d0" /><circle cx="18" cy="26" r="4" fill="#ddd" /></svg>;
  }
}

type Task = { a: App; t: string; w: string; on?: "lit" | "dark" };

function TaskButton({ a, t, w, on }: Task) {
  const tone = on === "lit" ? "from-[#d5dfe9] to-[#b3c5d6]" : on === "dark" ? "from-[#7f9690] to-[#3f5c66]" : "from-[#b9c7d6]/80 to-[#7d97b1]/80";
  return (
    <div className={`flex h-[39px] shrink-0 items-center gap-[7px] overflow-hidden rounded-[3px] border border-[#32465a] bg-linear-to-br pl-[7px] text-white shadow-[inset_0_0_0_1px_rgba(255,255,255,0.45)] ${tone} ${w}`}>
      <AppIcon a={a} /><span className="drop-shadow-[0_0_2px_#234]">{t}</span>
    </div>
  );
}

function AppsGrid({ className = "size-[30px]" }: { className?: string }) {
  return (
    <svg viewBox="0 0 30 38" className={`shrink-0 ${className}`}>
      <rect x="0" y="0" width="30" height="38" rx="3" fill="#fafafa" stroke="#bbb" />
      {["#ea4335", "#ea4335", "#ea4335", "#34a853", "#4285f4", "#fbbc05", "#34a853", "#fbbc05", "#fbbc05"].map((c, i) => (
        <rect key={i} x={7 + (i % 3) * 6} y={9 + Math.floor(i / 3) * 7} width="4.500" height="5" fill={c} />
      ))}
    </svg>
  );
}

/* ---------- left monitor, rear windows ---------- */

const code = "font-['DejaVu_Sans_Mono',monospace] text-[11px] tracking-[-0.3px]";

function SheetWindow() {
  return (
    <div className="absolute top-[800px] left-[280px] flex h-[316px] w-[259px] flex-col rounded-br-[6px] border border-[#4d5964] bg-[#c5e2f0] pr-[7px] pb-[5px] pl-[6px]">
      <div className="flex min-h-0 flex-1 bg-white">
        <div className="grid flex-1 grid-cols-[100px_101px_1fr] border-r border-[#ccc]">
          {Array.from({ length: 39 }, (_, i) => <div key={i} className="h-[21px] border-r border-b border-[#d8d8d8]" />)}
        </div>
        <div className="flex w-[12px] flex-col items-center justify-end gap-[11px] pb-[8px] text-[#888]"><Tri className="rotate-180" /><Tri /></div>
      </div>
      <div className="flex h-[39px] shrink-0 items-stretch bg-[#f1f3f4]">
        <div className="w-[84px]" />
        <div className="flex w-[104px] items-center gap-[12px] border-x border-[#ddd] bg-white pl-[12px] text-[#1a9450]">
          <span className="flex h-[18px] w-[17px] items-center justify-center rounded-[2px] bg-[#0f9d58] text-[13px] text-white">✦</span>Explore
        </div>
        <div className="flex flex-1 items-center justify-center text-[16px] text-[#555]">‹</div>
      </div>
    </div>
  );
}

function DomPanel() {
  const lines = ["▸ <", "  <", "", "", "  <", "  <", "", "", "  <", "▸ <", "  <", "  <", "  <", "  :", "</d", "<bu"];
  return (
    <div className="absolute top-[800px] left-[539px] flex h-[556px] w-[128px] flex-col overflow-hidden bg-white">
      <div className="mt-[94px] h-[17px] shrink-0 border-y border-[#d5d5d5] bg-[#dcdcdc] pl-[2px] text-[10px] leading-[12px] text-[#555]">•••</div>
      <div className={`absolute top-[26px] right-0 flex flex-col text-right text-[#a0208a] ${code}`}>
        {lines.map((l, i) => <span key={i} className="h-[16.500px] whitespace-pre">{l}</span>)}
      </div>
      <div className="mt-[209px] flex h-[24px] shrink-0 items-center gap-[13px] border-t border-[#ccc] pl-[7px] text-[#8f2f8a]"><span>html</span><span>body</span><span>div</span><span>di</span></div>
      <div className="flex h-[27px] shrink-0 items-center gap-[15px] border-t border-[#ccc] bg-[#f3f3f3] pl-[12px] text-[#444]"><b>⋮</b><span>Console</span><span className="border-b-2 border-[#1a73e8] pb-[2px]">What</span></div>
      <div className="flex h-[27px] shrink-0 items-center border-y border-[#ccc] bg-[#f3f3f3] pl-[13px] text-[11.500px] tracking-[-0.500px] text-[#333]">Highlights from the C</div>
      <div className="mt-[13px] ml-[18px] h-[47px] shrink-0 border border-r-0 border-[#ccc] pl-[7px]">
        <p className="mt-[3px] text-[12.500px] tracking-[-0.500px] text-[#1558c0]">Emulate vision d</p><p className="text-[12.500px] tracking-[-0.500px] text-[#999]">Get a visual appr</p>
      </div>
      <div className="mt-[5px] flex flex-1 items-center gap-[13px] border-t border-[#ccc] pl-[20px] tracking-[-0.500px] text-[#444]"><Chrome className="size-[14px]" />Upload files - P</div>
      <div className="mb-[4px] flex h-[40px] shrink-0 items-center gap-[21px] bg-[#3d5f6e] pl-[9px]"><Orb /><AppsGrid className="h-[31px] w-[30px]" /><i className="-ml-[8px] h-[37px] w-[20px] rounded-[3px] border border-white/50 bg-[#879caf]" /></div>
      <div className="h-[4px] shrink-0 bg-black" />
    </div>
  );
}

function TaskManager() {
  return (
    <div className={`absolute top-[217px] left-[146px] flex h-[140px] w-[660px] flex-col border-t border-l border-white bg-[#d5d1c8] font-['Liberation_Sans',sans-serif] text-[11px] tracking-normal text-black`}>
      <div className="flex h-[19px] shrink-0 items-center gap-[3px] bg-linear-to-r from-[#0a246a] to-[#6f93d2] pl-[3px] font-bold text-white"><span className="flex size-[14px] items-center justify-center border border-[#bbb] bg-[#0e3b1c] text-[8px] text-[#4f5]">▟</span>Windows Task Manager</div>
      <div className="flex h-[24px] shrink-0 items-center gap-[12px] pl-[7px]"><span>File</span><span>Options</span><span>View</span><span>Help</span></div>
      <div className="mt-[5px] flex h-[19px] shrink-0 items-end pl-[8px]">
        {["Applications", "Processes", "Services", "Performance", "Networking", "Users"].map((t) => (
          <span key={t} className={`border-t border-r border-r-[#555] border-t-white px-[4px] ${t === "Services" ? "h-[20px] pt-[1px]" : "h-[17px]"}`}>{t}</span>
        ))}
      </div>
      <div className="flex flex-1 flex-col border-t border-white px-[25px] pt-[17px]">
        <div className="flex flex-1 flex-col border-t border-l border-[#555] bg-white">
          <div className="grid h-[18px] grid-cols-[81px_41px_81px_53px_81px_1fr] bg-[#d5d1c8]">
            {["Name", "PID", "Description", "Status", "Group ▲", ""].map((t) => <span key={t} className="border-r border-b border-[#555] pl-[5px] leading-[18px]">{t}</span>)}
          </div>
          <div className="grid h-[17px] grid-cols-[81px_41px_81px_1fr] pl-[6px] leading-[17px]"><span>VaultSvc</span><span /><span>Credential ...</span><span>Stopped</span></div>
          <div className="grid h-[17px] grid-cols-[81px_41px_81px_1fr] pl-[6px] leading-[17px]"><span>SamSs</span><span>624</span><span>Security Ac...</span><span>Running</span></div>
        </div>
      </div>
    </div>
  );
}

function PhotoViewer() {
  const frag: NavItem[] = [
    ["folder", "My Musi", 2], ["folder", "Public M", 2], ["pics", "Pictures", 1], ["video", "Videos", 1], null,
    ["pc", "Computer", 0], ["drive", "RAPID (A:)", 1], ["os", "Local Disk", 1], ["drive", "Storage 1T", 1], ["cd", "CD Drive (H", 1], ["usb", "KINGSTON", 1],
    ["drive", "Files & Pro", 1], ["drive", "500GB_2.5S", 1], ["drive", "FileShare (T", 1], ["drive", "Storage (V:", 1], ["drive", "Entertainm", 1],
  ];
  return (
    <section className="absolute top-[560px] left-[667px] flex h-[840px] w-[960px] flex-col rounded-[8px] border border-[#3c4a57] bg-[#cfe9f7] px-[7px] shadow-[0_0_14px_3px_rgba(0,0,0,0.5)]">
      <div className="flex h-[774px] shrink-0 overflow-hidden">
        <div className="relative flex w-[137px] shrink-0 flex-col overflow-hidden bg-[#f6f6f6]">
          <div className="flex h-[706px] shrink-0">
            <div className={`flex w-[33px] flex-col items-end border-r border-[#ccc] bg-white pt-[262px] pr-[14px] text-[#777] ${code}`}>
              <span>59</span><span className="mt-[74px]">),</span><span className="mt-[34px]">03</span><span className="mt-[50px]">52</span><span className="mt-[26px] text-[16px] text-[#444]">×</span><span className="mt-[112px] text-[16px] text-[#444]">×</span>
            </div>
            <div className="flex w-[88px] flex-col overflow-hidden bg-[#fcfcfc]">
              <div className="-ml-[26px] pt-[257px]"><NavList items={frag} selected="Entertainm" /></div>
              <div className="mt-[28px] flex h-[54px] items-center gap-[9px] border-t border-[#cbdcee] bg-[#f1f4fc]"><Icon k="txt" className="size-[36px]" /><p className="leading-[18px]">New T<br /><span className="text-[#666]">Text D</span></p></div>
              <div className="flex flex-1 items-center gap-2 bg-[#879caf] text-white"><AppIcon a="winamp" />1. Ev...</div>
            </div>
            <div className="flex w-[16px] flex-col items-center justify-end border border-[#aaa] bg-linear-to-r from-[#f4f4f4] to-[#d4d4d6] pb-[5px]"><Tri /></div>
          </div>
          <div className="flex h-[20px] items-center justify-end bg-[#eee] pr-[22px]"><Tri className="-rotate-90" /></div>
          <div className="flex flex-1 items-center justify-between border-t border-[#ccc] bg-[#f3f3f3] px-[3px] text-[#555]">
            <span className="flex size-[15px] items-center justify-center rounded-full border border-[#777] leading-none">−</span>
            <span className="flex w-[84px] items-center justify-center bg-[linear-gradient(#999,#999)] bg-[length:100%_2px] bg-center bg-no-repeat"><i className="h-[15px] w-[8px] rounded-[2px] border border-[#777] bg-[#eee]" /></span>
            <span className="flex size-[15px] items-center justify-center rounded-full border border-[#777] leading-none">+</span>
          </div>
          <div className="h-[17px] bg-[#4b6271]" />
        </div>
        <div className="flex min-w-0 flex-1 flex-col bg-black">
          <div className="relative h-[517px] shrink-0 overflow-hidden bg-[#2b2b2b] text-[#bbb]">
            <div className="flex h-full w-[306px] border-r border-[#4a4a4a]">
              <div className="w-[22px] border-r border-[#555] bg-[#3c3f41]" />
              <div className="w-[228px] border-r-[8px] border-[#545759] bg-[#3c3f41] pt-[262px]">
                <div className="flex h-[20px] items-center gap-[6px] pl-[44px]"><Tri /><i className="h-[10px] w-[12px] bg-[#8a9499]" />notes</div>
                {["contract_access_test_resul", "dataSetExampleFormat.txt", "notes.txt", "test.txt"].map((t) => (
                  <div key={t} className="flex h-[20.300px] items-center gap-[4px] overflow-hidden pl-[82px] tracking-[-0.600px]"><i className="h-[12px] w-[9px] shrink-0 bg-[#9aa7b0]" />{t}</div>
                ))}
                <div className="flex h-[20px] items-center gap-[4px] pl-[63px]"><i className="size-[11px] rounded-full bg-[#e8c23a]" />script_connector.py</div>
                <div className="flex h-[20px] items-center gap-[8px] bg-[#4b4638] pl-[26px]"><Tri className="-rotate-90" /><i className="h-[10px] w-[12px] bg-[#8a9499]" />venv library</div>
                <div className="flex h-[20px] items-center gap-[7px] bg-[#4b4f51] pl-[8px]"><Tri className="-rotate-90" /><i className="h-[11px] w-[13px] bg-linear-to-r from-[#4a9] to-[#e8c23a]" />External Libraries</div>
                <div className="flex h-[24px] items-center gap-[18px] pl-[8px]">Run: <span className="flex items-center gap-[4px]"><i className="size-[12px] rounded-full bg-[#4584b6]" />ebay_obje</span></div>
                <div className={`flex gap-[16px] pl-[8px] leading-[33px] ${code}`}><div className="w-[45px] text-[18px] text-[#4eae53]">▸ <span className="text-[#aaa]">↑</span><br /><span className="text-[#777]">▪</span> <span className="text-[#aaa]">↓</span></div><div>C:\User<br />Your br</div></div>
              </div>
            </div>
            <div className="absolute top-[160px] left-0"><TaskManager /></div>
          </div>
          <HScroll thumb="w-[760px] flex-none" />
          <div className="flex h-[25px] shrink-0 items-center bg-[#f0eeee] pl-[2px] text-[13px]">To direct input to this VM, move the mouse pointer inside or press Ctrl+G.</div>
          <div className="flex h-[39px] shrink-0 items-center gap-[5px] bg-[#4b6675] pl-[8px]">
            <Orb /><i className="w-[21px]" /><AppsGrid className="h-[31px] w-[30px]" /><i className="w-[3px]" />
            <TaskButton a="chrome" t="Go..." w="w-[74px]" /><TaskButton a="sticky" t="Stic..." w="w-[80px]" /><TaskButton a="discord" t="Disc..." w="w-[80px]" />
            <TaskButton a="gem" t="Pee..." w="w-[78px]" /><TaskButton a="media" t="Ado..." w="w-[78px]" /><TaskButton a="firefox" t="Voi..." w="w-[78px]" />
          </div>
          <div className="flex-1 bg-black" />
        </div>
      </div>
      <div className="relative -mx-[7px] flex flex-1 items-center justify-center overflow-hidden rounded-b-[7px] bg-[linear-gradient(90deg,#e3fbff_0%,#c4f0ff_35%,#ffffff_55%,#b9f2ff_72%,#f4fdff_84%,#fbfdfe_100%)]">
        <div className="absolute top-0 left-[8px] h-[14px] w-[240px] bg-linear-to-r from-[#8fd4f5] via-[#b4e4ff] to-[#7fa4e0] blur-[4px]" />
        <div className="absolute top-[2px] right-[120px] h-[10px] w-[330px] bg-[#5cc8e6] blur-[6px]" />
        <div className="relative flex h-[31px] w-[402px] items-center justify-center rounded-full border border-[#6f97b8] bg-white/40 text-[20px] text-[#1c5cb8]">
          <svg viewBox="0 0 20 20" className="mr-[6px] size-[18px]"><circle cx="11" cy="8" r="6" fill="none" stroke="#1e5aa8" strokeWidth="2.500" /><path d="m7 12-6 7" stroke="#1e5aa8" strokeWidth="3" /><path d="M8 8h6m-3-3v6" stroke="#1e5aa8" strokeWidth="1.500" /></svg>
          <Tri className="mr-[26px]" />
          <svg viewBox="0 0 20 20" className="mr-[22px] size-[17px]"><path d="M5 5h10v10H5z" fill="none" stroke="#1e5aa8" strokeWidth="3" /><path d="M1 6V1h5M14 1h5v5M19 14v5h-5M6 19H1v-5" fill="none" stroke="#1e5aa8" strokeWidth="2" /></svg>
          <span className="flex h-[24px] w-[54px] items-center justify-center rounded-l-[5px] border border-[#6a8fb6] bg-[#a6bfd8]"><svg viewBox="0 0 16 12" className="h-[11px] w-[15px]"><path d="M1 0h3v12H1zM15 0v12L5 6z" fill="#6286ad" /></svg></span>
          <span className="-mx-[4px] flex size-[42px] items-center justify-center rounded-full border-2 border-[#dceafa] bg-linear-to-b from-[#7fa8ea] via-[#1b3fa8] to-[#49c4ff] outline outline-[#33507c]"><Icon k="pics" className="size-[24px]" /></span>
          <span className="flex h-[24px] w-[54px] items-center justify-center rounded-r-[5px] border border-[#6a8fb6] bg-[#a6bfd8]"><svg viewBox="0 0 16 12" className="h-[11px] w-[15px]"><path d="M12 0h3v12h-3zM1 0v12l10-6z" fill="#6286ad" /></svg></span>
          <svg viewBox="0 0 16 18" className="ml-[18px] h-[18px] w-[15px]"><path d="M3 5h4a5 5 0 0 1 1 10H6" fill="none" stroke="#1c5cb8" strokeWidth="3" /><path d="M0 5 7 0v10z" fill="#1c5cb8" /></svg>
          <svg viewBox="0 0 16 18" className="ml-[17px] h-[18px] w-[15px]"><path d="M13 5H9a5 5 0 0 0-1 10h2" fill="none" stroke="#1c5cb8" strokeWidth="3" /><path d="m16 5-7-5v10z" fill="#1c5cb8" /></svg>
          <i className="mx-[14px] h-[22px] w-px bg-[#9ab]" />
          <svg viewBox="0 0 16 16" className="size-[15px]"><path d="m2 1 12 14M14 1 2 15" stroke="#d3282c" strokeWidth="2.600" /></svg>
        </div>
      </div>
    </section>
  );
}

function PaintBackdrop() {
  return (
    <>
      {/* ribbon of the maximised picture editor */}
      <div className="absolute inset-x-0 top-0 flex h-[142px] flex-col border-b-[5px] border-[#b9c8de]">
        <div className="flex h-[20px] justify-end bg-linear-to-r from-[#6d9dbd] to-[#82c4ee]"><Caption tone="dark" /></div>
        <div className="flex h-[25px] items-center justify-end border-y border-[#b7c7da] bg-[#dfe9f5] pr-[3px]"><HelpDot /></div>
        <div className="flex-1 bg-linear-to-b from-[#f4f8fd] to-[#d9e5f4]" />
      </div>
      {/* browser picture on the canvas */}
      <div className="absolute top-[142px] left-[1140px] flex h-[426px] w-[260px] flex-col overflow-hidden bg-white">
        <div className="h-[130px] shrink-0 bg-black" />
        <div className="flex h-[34px] shrink-0 items-center bg-[#dee1e6] pl-[34px] text-[13px] text-[#666]"><Ebay /><span className="ml-[8px] w-[59px] overflow-hidden [mask-image:linear-gradient(90deg,#000_70%,transparent)]">https://ww</span><b className="ml-[8px] text-[#444]">✕</b><i className="mx-[11px] h-[20px] w-px bg-[#888]" /><FcGoogle size={15} /><span className="ml-[14px] text-[12px]">tourettes</span></div>
        <div className="mt-[4px] h-[28px] shrink-0 bg-[#f1f3f4]" />
        <div className="flex h-[37px] shrink-0 items-center gap-[11px] border-b border-[#ccc] pl-[22px] text-[13px] text-[#555]">2] <i /> <Gmail /> [3] <i /> <Gmail /> [4] <i /> <Gmail /> [5]</div>
        <div className="mt-[12px] border-t border-[#ddd] pt-[6px] pl-[22px] font-['DejaVu_Sans',sans-serif] text-[11.500px] leading-[15px] font-bold tracking-[-0.300px] text-[#1a1aa6]">nit-summary-input.form<br />ut-block.input-contrast.j<br />-commi...</div>
        <div className="mt-[5px] pl-[170px] leading-[18px] text-[#555]">☐#<br /><span className="pl-[11px]">10</span><br /><span className="pl-[18px]">6</span></div>
        <div className="absolute top-[365px] left-0 h-[29px] w-full border-t-2 border-[#555] bg-linear-to-r from-[#cdf3f1] to-[#f3fdff]" />
        <div className="absolute top-[394px] left-0 h-[32px] w-full border-t border-[#889] bg-linear-to-b from-[#f7faff] to-[#cddff0]" />
        <div className="absolute top-[187px] left-[194px] h-[178px] w-[80px] rounded-tl-[6px] border border-[#667] bg-white shadow-[0_0_10px_#0006]" />
        <div className="absolute top-[205px] left-[194px] h-[160px] w-[80px] overflow-hidden rounded-tl-[6px] border border-[#667] bg-[#e7fbff] pt-[33px] pl-[8px]"><BackForward /><div className="mt-[5px] h-[20px] border-t border-l border-[#778] bg-[#e6e4f2] pl-[8px]">F</div><div className="h-[31px] border-b border-l border-[#9ab] bg-[#dfe9f6]" /><div className="h-[60px] border-l border-[#778] bg-white" /></div>
        <div className="absolute top-[230px] left-[219px] h-[135px] w-[60px] overflow-hidden rounded-tl-[6px] border border-[#456] bg-linear-to-b from-[#a9cdf0] via-[#d9ebfb] to-[#e8f4fd] pt-[31px] pl-[7px]"><BackForward /><div className="mt-[5px] h-[20px] border-t border-l border-[#778] bg-[#e6e4f2]" /><div className="h-[31px] border-b border-l border-[#9ab] bg-[#dfe9f6]" /><div className="h-[60px] border-l border-[#778] bg-white" /></div>
      </div>
      <div className="absolute top-[568px] left-[1140px] h-[300px] w-[260px] bg-[#2b2b2b]" />
      {/* right edge of the canvas */}
      <div className="absolute top-[142px] left-[2505px] h-[250px] w-[40px] bg-black" />
      <div className="absolute top-[392px] left-[2505px] h-[602px] w-[40px] bg-[#fcfcfc] pt-[433px] pr-[3px] text-right leading-[19px]">ase_<div className="pt-[64px] leading-[21px]">Musi<br />c M<br />s</div></div>
      <div className="absolute top-[142px] left-[2543px] flex h-[852px] w-[17px] overflow-hidden"><VScroll thumb="h-[1000px] flex-none" /></div>
      <div className="absolute top-[994px] left-[2470px] flex h-[406px] w-[90px] flex-col bg-white">
        <div className="h-[30px] border-y border-[#666] bg-linear-to-r from-white to-[#d8f4fd]" />
        <div className="h-[20px] bg-linear-to-b from-white to-[#dcdff2]" />
        <div className="h-[42px] border-y border-[#888] bg-[#f0f0f0]" />
        <div className="h-[26px] border-b border-[#666] bg-[#a3bedb]" />
        <div className="flex h-[24px] items-center justify-end border-b border-[#ddd] bg-[#f4f4f6] text-[13px] font-bold">M</div>
        <div className="mt-[19px] h-[18px] bg-[#3399ff]" />
        <div className="flex flex-col items-end pt-[18px] leading-[18px]">
          {["5", "3", "1", "0", "1", "1", "", "91 °F)          3", "22 °F)       5", "", "M                1", "M                1"].map((t, i) => <span key={i} className="h-[18px] whitespace-pre">{t}</span>)}
        </div>
      </div>
    </>
  );
}

function LeftMonitor() {
  return (
    <div className="absolute top-0 left-0 h-[1440px] w-[2560px] overflow-hidden bg-[#f4f4f4]">
      <PaintBackdrop />
      <div className="absolute top-[780px] left-0 flex h-[576px] w-[287px] flex-col border-r-[7px] border-l-4 border-[#cfe0f1] bg-[#fcfcfc]"><div className="flex-1 border-r border-[#555]" /><div className="h-[9px] border-t-2 border-[#cbdcee] bg-[#eef2fb]" /></div>
      <div className="absolute top-[1100px] left-[287px] flex h-[256px] w-[165px] bg-white"><div className="flex-1" /><div className="w-[17px] bg-[#e9e9ec]" /><div className="w-[9px] border border-[#555] bg-[#b9dbee]" /></div>
      <div className="absolute top-[1100px] left-[452px] flex h-[256px] w-[90px] flex-col bg-[#418080]"><div className="h-[79px] bg-[#fcfcfc]" /><div className="h-[52px] border-t-2 border-[#cbdcee] bg-[#f1f4fc]" /><div className="h-[8px] border-y border-[#444] bg-[#a9d3e8]" /></div>
      <SheetWindow />
      <DomPanel />
      <div className="absolute top-[1356px] left-0 flex h-[44px] w-[670px] flex-col">
        <div className="flex h-[20px] items-center overflow-hidden border-t border-[#bbb] bg-[#f0f0f0]"><HScroll thumb="w-[1110px] flex-none" /></div>
        <div className="grid h-[24px] grid-cols-[156px_156px_156px_156px_1fr] items-stretch border-t border-[#a0a0a0] bg-[#f0eded]">
          <span className="border-r border-[#d5d5d5] pl-[3px]">✢</span><span className="border-r border-[#d5d5d5] pl-[4px]">⬚</span><span className="flex items-center gap-[4px] border-r border-[#d5d5d5] pl-[4px]"><i className="h-[10px] w-[12px] border border-[#555]" />5760 × 1440px</span><span className="border-r border-[#d5d5d5]" />
        </div>
      </div>

      {/* lower middle explorer */}
      <div className="absolute top-[1190px] left-[1600px] flex h-[220px] w-[889px] border-r-[7px] border-[#cfe6f5] bg-[#fcfcfc] outline outline-[#445]">
        <div className="w-[110px] border-r border-[#dde6f0]" />
        <div className="mt-[6px] grid h-[21px] flex-1 grid-cols-[259px_121px_120px_80px] items-center pl-[18px]"><span className="flex items-center gap-[4px]"><Icon k="png" />whatneighbordoing.png</span><span className="text-[#6d6d6d]">6/15/2020 10:07 AM</span><span className="text-[#6d6d6d]">PNG File</span><span className="text-right text-[#6d6d6d]">1,540 KB</span></div>
      </div>
      <PhotoViewer />
      <div className="absolute top-[1340px] left-[1388px] flex flex-col gap-[13px] text-[#7d8fc0] blur-[2px]">
        {[0, 1, 2].map((i) => <div key={i} className="flex gap-[8px]"><i className="h-[9px] w-[12px] bg-[#9ab4c8]" /><i className="h-[8px] w-[72px] bg-[#a9b9e2]" /></div>)}
      </div>
      <section className="absolute top-[700px] left-[1385px] flex h-[500px] w-[1137px] flex-col rounded-b-[8px] border border-[#3a4652] bg-[#dff1fb] px-[5px] pb-[6px] shadow-[0_3px_14px_3px_rgba(0,0,0,0.55)]">
        <div className="flex flex-1 flex-col border border-[#5f6b78] bg-[#fcfcfc]">
          <div className="flex flex-1">
            <div className="w-[353px] border-r-2 border-[#dbe6f3] pt-[137px]"><NavList items={[...computer, ...tail, ...network]} selected="Storage (V:)" /></div>
          </div>
          <div className="flex h-[54px] shrink-0 border-t-2 border-[#cbdcee] bg-[#f1f4fc] pl-[20px]">
            <div className="relative mt-[6px] mr-[18px] flex h-[39px] w-[54px] items-center justify-center bg-[linear-gradient(90deg,transparent_30%,#f5cf2b_30%_44%,transparent_44%),linear-gradient(180deg,#2f76b8_42%,#f5cf2b_42%_58%,#3b84c4_58%)] font-['Liberation_Serif',serif] text-[15px] font-bold text-[#8a1212]">Sweden<span className="absolute -right-[4px] -bottom-[2px] bg-[#d9482a] px-[4px] text-[11px] text-white">P</span></div>
            <div className="grid h-[40px] grid-cols-[234px_80px_112px_70px_134px_70px] pt-[5px] leading-[18px] text-[#1e395b]">
              <span className="text-[13px] text-black">SwedishSocial.ppt</span><span className="pr-[4px] text-right text-[#5a6779]">Date modified:</span><span>3/5/2009 6:38 AM</span><span className="pr-[4px] text-right text-[#5a6779]">Tags:</span><span>Add a tag</span><span><span className="text-[#5a6779]">Title: </span>Slide 1</span>
              <span className="text-[#5a6779]">Microsoft PowerPoint 97-2003 Presentation</span><span className="pr-[4px] text-right text-[#5a6779]">Authors:</span><span>655511sjo</span><span className="pr-[4px] text-right text-[#5a6779]">Size:</span><span>1.22 MB</span>
            </div>
          </div>
        </div>
      </section>

      {/* window behind FileShare */}
      <section className="absolute top-[1px] left-0 flex h-[802px] w-[1138px] flex-col rounded-[8px] border border-[#3a4652] bg-[linear-gradient(90deg,#a9c6d8_0%,#7fa9c4_30%,#c8eaf5_50%,#74a6c2_75%,#4b86a8_100%)] px-[6px] pb-[7px] shadow-[0_2px_12px_2px_rgba(0,0,0,0.5)]">
        <div className="flex h-[19px] justify-end"><Caption tone="dark" /></div>
        <div className="mt-[13px] pl-[1px]"><BackForward /></div>
        <div className="mt-[4px] flex flex-1 flex-col border border-[#778] bg-[#fcfcfc]"><Menu /><div className="h-[31px] border-b border-[#a4b4cb] bg-[#dfe9f6]" /><div className="flex-1" /><div className="h-[53px] border-t-2 border-[#cbdcee] bg-[#f1f4fc]" /></div>
      </section>

      <Explorer
        className="top-[25px] left-[26px] h-[803px] w-[1137px] bg-[linear-gradient(90deg,#dff3fb_0%,#e8fbff_70%,transparent_70%),linear-gradient(180deg,#d9f4f7_0_14%,#0a0d10_15%_30%,#e1f8fb_31%_66%,#333c47_68%)]"
        back={<div className="absolute inset-x-0 top-0 h-[64px] overflow-hidden bg-[linear-gradient(90deg,#9db6cf_0%,#c9f3f7_4%,#d3fbfb_55%,#f0ffff_62%,#c9f3f5_100%)]"><GhostBar className="mt-[17px] ml-[44px] text-[#a9c4e0]" /><div className="mt-[3px] ml-[650px] flex gap-[7px] blur-[2px]"><i className="mr-[46px] h-[7px] w-[28px] bg-[#223]" /><i className="h-[7px] w-[14px] bg-[#223]" /><i className="h-[7px] w-[14px] bg-[#8894b0]" /><i className="h-[7px] w-[14px] bg-[#983050]" /><i className="h-[7px] w-[14px] bg-[#e05050]" /><i className="h-[7px] w-[14px] bg-[#f7b48a]" /><i className="h-[7px] w-[14px] bg-[#f3f3a0]" /><i className="h-[7px] w-[14px] bg-[#3fc0a6]" /><i className="h-[7px] w-[14px] bg-[#38a3ea]" /><i className="h-[7px] w-[14px] bg-[#4f58cc]" /><i className="h-[7px] w-[14px] bg-[#8369d4]" /></div></div>}
        crumbs={["Computer", "FileShare (T:)"]} drive="drive" search="Search FileShare (T:)" searchW="w-[190px]"
        tools={<><Tool>Organize <Tri /></Tool><Tool><Icon k="lib" />Open</Tool><Tool>Include in library <Tri /></Tool><Tool>Share with <Tri /></Tool><Tool>Slide show</Tool><Tool>New folder</Tool></>}
        nav={<div className="w-[352px] shrink-0 overflow-hidden border-r border-[#d6e5f5] pt-[10px]"><NavList items={fullNav} selected="FileShare (T:)" /></div>}
        body={
          <div className="flex min-w-0 flex-1 flex-col">
            <div className="flex min-h-0 flex-1">
              <FileList rows={fileShareRows} selected={["New folder (4)"]} head="ml-[11px] grid-cols-[471px_120px_120px_34px]" widths="ml-[15px]" cols="w-[760px] grid-cols-[471px_121px_120px_29px]" />
              <VScroll thumb="h-[216px] flex-none" className="mr-px" />
            </div>
            <div className="mr-[15px]"><HScroll thumb="w-[666px] flex-none" /></div>
          </div>
        }
        details={<><BigFolder /><div className="pt-[5px] pl-[20px] leading-[18px]"><p><span className="text-[13px]">New folder (4)</span> <span className="text-[#5a6779]">&nbsp;Date modified:</span> <span className="text-[#1e395b]">6/13/2020 6:29 PM</span></p><p className="text-[#5a6779]">File folder</p></div></>}
      />

      {/* window behind the loan folder */}
      <section className="absolute top-0 left-[1376px] flex h-[803px] w-[1137px] flex-col rounded-[8px] border border-[#3a4652] bg-[linear-gradient(180deg,#dff6fb_0_17%,#0a0d10_18%_33%,#d5f1f8_34%_68%,#38424d_70%)] px-[6px] pb-[7px] shadow-[0_2px_12px_2px_rgba(0,0,0,0.5)]">
        <div className="-mx-[6px] flex h-[26px] justify-end bg-[linear-gradient(90deg,#a5e0ff_0%,#6db0dc_50%,#a7d9f5_75%,#8fc8e8_100%)] pr-[6px]"><Caption tone="dark" /></div>
        <div className="mt-[6px] pl-[1px]"><BackForward /></div>
        <div className="mt-[6px] flex flex-1 flex-col border border-[#778] bg-[#fcfcfc]"><Menu /><div className="h-[31px] border-b border-[#a4b4cb] bg-[#dfe9f6]" /><div className="flex-1" /><div className="h-[53px] border-t-2 border-[#cbdcee] bg-[#f1f4fc]" /></div>
      </section>

      <Explorer
        className="top-[25px] left-[1401px] h-[803px] w-[1137px] bg-[linear-gradient(180deg,#b6d3f0_0_10%,#9dc0e0_14%,#cfe3f8_24%,#b5d5f6_55%,#bcdcfa_100%)]" caption="red"
        back={<div className="absolute inset-x-0 top-0 h-[64px] overflow-hidden bg-[linear-gradient(180deg,transparent_40%,#c6ddf5_100%),linear-gradient(90deg,#c3d7ee_0%,#7fb3dd_35%,#a9cdef_60%,#8fbfe6_80%,#c6dcf3_100%)]"><GhostBar className="mt-[17px] ml-[44px] text-[#7d9cbc]" /></div>}
        crumbs={["Computer", "Storage (V:)", "O_DRIVE", "My Documents", "~Michigan Tech~", "~Sallie Mae Loan Info~"]} drive="folder" search="Search ~Sallie Mae Loan Inf..." searchW="w-[190px]"
        tools={<><Tool>Organize <Tri /></Tool><Tool><Icon k="pdf" />Open with Adobe Acrobat X</Tool><Tool>Print</Tool><Tool>New folder</Tool></>}
        nav={<div className="w-[352px] shrink-0 overflow-hidden border-r border-[#d6e5f5] pt-[10px]"><NavList items={fullNav} selected="Storage (V:)" /></div>}
        body={<FileList tone="blue" selected={["SallieMaeLoan_ImportDocA.pdf", "SallieMaeLoan_ImportDocSigned.pdf"]}
          rows={[["pdf", "SallieMaeLoan_ImportDocA.pdf", "7/26/2011 2:22 AM", "Adobe Acrobat D...", "317 KB"], ["pdf", "SallieMaeLoan_ImportDocSigned.pdf", "7/26/2011 2:23 AM", "Adobe Acrobat D...", "317 KB"]]}
          head="ml-[11px] grid-cols-[261px_120px_120px_80px]" widths="ml-[15px]" cols="w-[575px] grid-cols-[263px_120px_120px_70px]" />}
        details={<><Icon k="pdf" className="mt-[5px] ml-[17px] size-[44px]" /><div className="grid h-[40px] grid-cols-[182px_138px_190px] pt-[5px] pl-[18px] leading-[18px] text-[#1e395b]"><span className="pr-[4px] text-right text-[#5a6779]"><span className="text-[13px] text-[#1e395b]">2 items selected</span>&nbsp; Date modified:</span><span>7/26/2011 2:23 AM</span><span><span className="text-[#5a6779]">Date created: </span>12/2/2016 1:20 AM</span><span className="pr-[4px] text-right text-[#5a6779]">Size:</span><span>633 KB</span></div></>}
      />

      <footer className="absolute bottom-0 left-0 flex h-[40px] w-full items-center border-t border-[#51677c] bg-[#8ea7c2] pl-[2px]">
        <div className="flex gap-[4px]">
          <TaskButton a="npp" t="R:\YouTubeSidCo..." w="w-[159px]" on="dark" /><TaskButton a="chrome" t="eBay Fee Deferra..." w="w-[153px]" /><i className="w-[2px]" />
          <TaskButton a="folder" t="~Sallie Mae Loa..." w="w-[153px]" on="lit" /><i className="w-[2px]" /><TaskButton a="cmd" t="Administrator: Co..." w="w-[158px]" /><TaskButton a="notepad" t="currentList.txt - ..." w="w-[154px]" />
          <TaskButton a="photo" t="WHY3.png - Wi..." w="w-[157px]" /><TaskButton a="paint" t="Untitled - Paint" w="w-[159px]" /><TaskButton a="siw" t="SIW 2014 (license..." w="w-[158px]" />
        </div>
        <div className="ml-[84px] flex flex-col gap-[10px] blur-[2px]"><i className="h-[8px] w-[110px] bg-[#5d7186]" /><i className="h-[8px] w-[120px] bg-[#5d7186]" /></div>
      </footer>
    </div>
  );
}

/* ---------- middle monitor ---------- */

const cdoc = "size-[16px]";
const tabs: [ReactNode, string][] = [
  [<FaGithub size={17} color="#111" />, "Upload file"], [<Ebay />, "My eBay A"], [<Ebay />, "My eBay Sc"], [<Ebay />, "My eBay: M"], [<Ebay />, "My eBay Re"],
  [<Ebay />, "https://www"], [<FcGoogle size={16} />, "tourettes g"], [<FaYoutube size={17} color="#f00" />, "The Very Be"], [<FaYoutube size={17} color="#f00" />, "Tourettes G"],
  [<Slides />, "Copy of OV"], [<FaPaypal size={15} color="#123a86" />, "PayPal Prep"], [<FaFacebook size={16} color="#1877f2" />, "(2) Joseph"], [<GDrive />, "My Drive -"], [<FaPaypal size={15} color="#123a86" />, "PayPal Prep"],
];

function Sq({ children, className }: { children?: ReactNode; className: string }) {
  return <span className={`flex size-[16px] shrink-0 items-center justify-center text-[11px] font-bold text-white ${className}`}>{children}</span>;
}

function BrowserTop() {
  return (
    <>
      <div className="flex h-[34px] shrink-0 bg-linear-to-r from-[#5f9bab] via-[#4c8c9d] to-[#93c4e4] pl-[8px]">
        {tabs.map(([ic, t], i) => (
          <div key={i} className={`flex shrink-0 items-center gap-[7px] pl-[11px] ${i === 0 ? "w-[125px] rounded-t-[8px] bg-white" : "w-[122.600px] rounded-t-[5px] bg-[#e6eaed]"}`}>
            <span className="flex w-[17px] justify-center">{ic}</span><span className="w-[60px] overflow-hidden text-[12.500px] tracking-[-0.600px] text-[#5f6368] [mask-image:linear-gradient(90deg,#000_75%,rgba(0,0,0,0.25))]">{t}</span>
            <svg viewBox="0 0 10 10" className="size-[9px]"><path d="m1 1 8 8M9 1 1 9" stroke="#5f6368" strokeWidth="1.800" /></svg>
            {i > 0 && i < 13 && <i className="ml-auto h-[20px] w-px bg-[#8a9095]" />}
          </div>
        ))}
        <span className="mt-[4px] ml-[8px] flex size-[27px] items-center justify-center rounded-full bg-[#dfe5ea] text-[22px] leading-none text-[#444]">+</span>
        <div className="flex-1" /><Caption tone="dark" className="mr-[2px]" />
      </div>
      <div className="flex h-[36px] shrink-0 items-center bg-white pl-[13px] text-[#5f6368]">
        <ArrowLeft size={18} strokeWidth={2.400} /><ArrowRight size={18} strokeWidth={2} className="ml-[14px] text-[#bbb]" /><RotateCw size={16} strokeWidth={2.600} className="ml-[14px]" /><House size={17} strokeWidth={2.200} className="ml-[16px]" />
        <div className="ml-[14px] flex h-[28px] w-[1477px] items-center rounded-full bg-[#f1f3f4] px-[12px] text-[14px]">
          <Lock size={12} strokeWidth={3} className="mr-[10px]" /><span className="text-[#202124]">github.com</span>/Perfectfire33/ebay_api/upload/ebay_api_framework
          <Star size={16} className="ml-auto" />
        </div>
        <span className="relative ml-[14px]"><Sq className="rounded-[3px] bg-[#56a83b]">✓</Sq><b className="absolute top-[8px] left-[9px] bg-[#d11] px-[2px] text-[10px] leading-[12px] text-white">1</b></span>
        <span className="relative ml-[16px]"><Sq className="bg-[#1e9ee8]" /><b className="absolute top-[8px] -left-[2px] bg-[#7a3b0c] px-px text-[9px] leading-[12px] text-white">190</b></span>
        <span className="ml-[16px] text-[16px] font-bold text-[#16509c]">Y</span>
        <svg viewBox="0 0 16 16" className="ml-[18px] size-[16px]"><path d="M1 2h14v6a7 7 0 0 1-14 0z" fill="none" stroke="#777" strokeWidth="2" /><path d="m5 6 3 3 3-3" fill="none" stroke="#777" strokeWidth="2" /></svg>
        <svg viewBox="0 0 16 16" className="ml-[16px] size-[16px]"><path d="M5.500 1.500h5l5 9-2.500 4H3l-2.500-4z" fill="#8a8a8a" /></svg>
        <i className="mx-[14px] h-[16px] w-px bg-[#ccc]" />
        <span className="-ml-[5px] flex h-[28px] w-[81px] shrink-0 items-center gap-[7px] rounded-full border border-[#4a80d8] bg-[#eef4fe] pl-[3px] text-[13px] tracking-[-0.500px] text-[#3367c8]"><i className="flex size-[21px] items-center justify-center rounded-full bg-[#4a2a2a]"><b className="h-[12px] w-[9px] rounded-full bg-[#d8a898]" /></i>Paused</span>
        <b className="ml-[12px] text-[17px]">⋮</b>
      </div>
      <div className="flex h-[34px] shrink-0 items-center border-b border-[#d5d7da] bg-white pl-[14px] text-[13px] text-[#4b4f54]">
        <svg viewBox="0 0 13 13" className="mr-[10px] size-[13px]">{["#ea4335", "#ea4335", "#ea4335", "#34a853", "#4285f4", "#fbbc05", "#34a853", "#fbbc05", "#fbbc05"].map((c, i) => <rect key={i} x={(i % 3) * 5} y={Math.floor(i / 3) * 5} width="3" height="3" fill={c} />)}</svg>
        <span className="w-[45px]">Apps</span><FcGoogle size={15} /><FaYoutube size={17} color="#f00" className="mx-[16px] shrink-0" /><span className="-ml-[8px] w-[130px] tracking-[-0.500px]">(6) Oregon Trail II...</span>
        <i className="mr-[17px] h-[15px] w-[11px] rotate-12 rounded-full bg-[#f5c518]" /><Sq className="mr-[16px] bg-[#4267b2]"><FaFacebookF /></Sq><Sq className="mr-[16px] bg-[#0a73b1]"><FaLinkedinIn /></Sq><FaReddit size={16} color="#ff4500" className="mr-[15px]" /><FaYoutube size={17} color="#f00" className="mr-[16px]" />
        {[["[0]PfireIII", "w-[64px]"], ["[1]MTU", "w-[57px]"], ["[2]", "w-[31px]"], ["[3]", "w-[31px]"], ["[4]", "w-[31px]"], ["[5]", "w-[31px]"]].map(([t, w]) => <span key={t} className="flex items-center gap-[8px]"><Gmail /><span className={w}>{t}</span></span>)}
        <i className="mr-[9px] h-[14px] w-[13px] rounded-[1px] border border-[#e0b93b] bg-[#fbe28a]" /><span className="w-[98px]">BudgetGaming</span><i className="mr-[9px] h-[14px] w-[13px] rounded-[1px] border border-[#e0b93b] bg-[#fbe28a]" /><span className="w-[53px]">Crypto</span>
        <div className="flex items-center gap-[16px]"><FaCrown size={16} color="#f5b301" /><Sq className="bg-[#222]">w</Sq><FaPaypal size={14} color="#123a86" /><Sq className="rounded-full bg-[#165c22]">▥</Sq><Sq className="rounded-full bg-[#3f0f52]">q</Sq><Sq className="text-[#d5304a]">◆</Sq><Sq className="bg-[#0f4474]">☽</Sq><Sq className="text-[15px] text-[#d42f2f]">7</Sq><Sq className="bg-[#0f52f5]">C</Sq><Sq className="text-[16px] text-[#1c84d8]">❖</Sq><Sq className="rounded-[3px] bg-[#1c57a6]">G</Sq><Sq className="rounded-[3px] bg-[#f26b2a]">N</Sq><Sq className="text-[16px] text-[#e50914]">N</Sq><Sq className="rounded-full bg-[#666]">S</Sq></div>
        <span className="ml-[9px] w-[42px]">eBay</span><Sq className="mr-[18px] rounded-full border-2 border-[#5a1a9a] text-[#5a1a9a]">☮</Sq>
        <i className="mr-[11px] h-[14px] w-[13px] rounded-[1px] border border-[#e0b93b] bg-[#fbe28a]" /><span className="w-[50px]">[Main]</span><Ebay /><span className="ml-[8px]">Manage active list</span>
        <span className="ml-auto">»</span><i className="mx-[12px] h-[16px] w-px bg-[#ccc]" /><i className="mr-[9px] h-[14px] w-[13px] rounded-[1px] border border-[#e0b93b] bg-[#fbe28a]" /><span className="pr-[15px]">Other bookmarks</span>
      </div>
    </>
  );
}

function DropIcons() {
  return (
    <svg viewBox="0 0 206 54" className="h-[54px] w-[206px]" fill="none" stroke="#666" strokeWidth="2">
      <path d="M2 14h17l6 6v20H2z" /><path d="M12 14v14" strokeDasharray="2 2" /><path d="M9 34h6l-1-5h-4z" />
      <path d="M36 6h24l9 9v31H36zM42 12v28h22M48 20v16M54 26v10M60 31v5" />
      <path d="M82 1h30l11 11v40H82z" /><path d="m100 20-8 8 8 8M106 20l8 8-8 8" strokeWidth="3" />
      <path d="M136 6h24l9 9v31h-33zM142 15h10M142 23h20M142 29h20M142 35h20M142 41h20" />
      <path d="M181 14h17l6 6v20h-23zM184 38c6-6 9-16 8-22 0 8 5 14 11 13-6 0-13 3-19 9z" />
    </svg>
  );
}

function MiddleMonitor() {
  const files = ["Project.7z", "Get Out Alive (Nightcore).mp3", "Untitled.png", "[HU3120]gradeCalc.txt"];
  return (
    <div className="absolute top-0 left-[2560px] h-[1440px] w-[1920px] overflow-hidden bg-black">
      <div className="absolute top-[162px] left-0 flex h-[1040px] w-full flex-col bg-white">
        <BrowserTop />
        <div className="flex min-h-0 flex-1">
          <main className="flex flex-1 flex-col overflow-hidden pl-[462px] font-['Open_Sans',sans-serif] text-[14px] tracking-[-0.400px] text-[#24292e]">
            <div className="mt-[21px] flex h-[318px] w-[980px] shrink-0 rounded-t-[3px] border border-[#d1d5da] border-b-2 p-[9px]">
              <div className="relative flex flex-1 flex-col items-center border-[6px] border-dashed border-[#ddd] pt-[84px]">
                <DropIcons />
                <h2 className="mt-[8px] text-[24px] leading-[32px] font-medium tracking-[-0.500px] text-[#666]">Drop to upload your files</h2>
                <div className="absolute top-[124px] left-[4px] flex h-[104px] w-[105px] items-center justify-center rounded-[3px] border border-[#cfe8f8] bg-[#e6f4fc] shadow-[1px_2px_4px_#999]">
                  <svg viewBox="0 0 90 92" className="h-[92px] w-[90px]">
                    <path d="M22 2h43l22 26v62H22z" fill="#fafbfc" stroke="#bbb" /><path d="M65 2c3 10 3 18 2 24l20 2z" fill="#e4e6e8" stroke="#bbb" />
                    <path d="M1 6h20v3h43v22H1z" fill="#b24555" />
                    <path d="M52 36c2 20-6 36-21 46 4-12 24-22 51-18-18 2-28-10-30-28z" fill="none" stroke="#a93a48" strokeWidth="2.500" />
                  </svg>
                  <b className="absolute top-[15px] left-[21px] text-[15px] leading-[20px] tracking-normal text-white">PDF</b>
                  <span className="absolute top-[43px] left-[43px] flex size-[15px] items-center justify-center bg-[#1a55b8] text-[12px] text-white">2</span>
                </div>
                <div className="absolute top-[230px] left-[67px] flex h-[20px] w-[55px] items-center gap-[4px] rounded-[2px] border border-[#767676] bg-linear-to-b from-white to-[#e6e7f3] pl-[3px] text-[12px] text-[#1b3da8]"><b className="text-[17px] leading-none text-[#0f53c0]">+</b>Copy</div>
              </div>
            </div>
            <ul className="w-[980px] shrink-0 rounded-b-[3px] border-x border-b border-[#d1d5da]">
              {files.map((f) => (
                <li key={f} className="flex h-[37px] items-center gap-[6px] border-b border-[#e1e4e8] pr-[13px] pl-[16px] text-[#7b838a] last:border-b-0">
                  <svg viewBox="0 0 12 16" className="h-[15px] w-[12px]"><path d="M1.500 1h6l3.500 4v10h-9.500zM7 1v4.500h4" fill="none" stroke="#7f93ad" strokeWidth="1.700" /></svg>
                  {f}<svg viewBox="0 0 10 10" className="ml-auto size-[9px]"><path d="m1 1 8 8M9 1 1 9" stroke="#888" strokeWidth="1.800" /></svg>
                </li>
              ))}
            </ul>
            <div className="mt-[20px] flex w-[980px] shrink-0">
              <svg viewBox="0 0 48 48" className="mr-[16px] size-[48px]"><rect width="48" height="48" rx="3" fill="#f0f0f0" /><path d="M4 11h8v9H4zM36 11h8v9h-8zM12 28h8v8h8v-8h8v16H12z" fill="#ca6b8c" /></svg>
              <div className="relative flex h-[283px] flex-1 flex-col rounded-[3px] border border-[#dfe2e6] px-[16px] pr-[17px]">
                <i className="absolute top-[13px] -left-[6px] size-[11px] rotate-45 border-b border-l border-[#dfe2e6] bg-white" />
                <h3 className="mt-[18px] text-[20px] leading-[26px] font-semibold tracking-[-0.900px]">Commit changes</h3>
                <div className="mt-[11px] flex h-[34px] shrink-0 items-center rounded-[3px] border border-[#cdd2d8] bg-[#fafbfc] pl-[8px] shadow-[inset_0_1px_2px_#0001]">EST === "EASTERN STANDARD TIME"</div>
                <div className="mt-[10px] flex h-[100px] shrink-0 rounded-[3px] border border-[#cdd2d8] bg-[#fafbfc] pl-[8px]">
                  <span className="flex-1 pt-[30px]">EST === "EASTERN STANDARD TIME"</span>
                  <div className="flex w-[17px] flex-col items-center bg-[#f1f1f1]"><Tri className="mt-[7px] rotate-180" /><i className="mt-[31px] h-[17px] w-[13px] bg-[#c1c1c1]" /><Tri className="mt-[9px]" /><i className="mt-auto h-[17px] w-full bg-[#ddd]" /></div>
                </div>
                <div className="mt-[16px] flex h-[22px] items-center gap-[7px] pl-[4px]"><i className="flex size-[13px] items-center justify-center rounded-full border border-[#0a6cff] bg-white"><b className="size-[8px] rounded-full bg-[#0a75ff]" /></i><GitCommitHorizontal size={17} color="#6a737d" strokeWidth={2.600} />Commit directly to the <code className="-ml-[3px] rounded-[3px] bg-[#eaf5ff] px-[6px] py-[1px] font-['DejaVu_Sans_Mono',monospace] text-[11px] text-[#5f7388]">ebay_api_framework</code> branch.</div>
                <div className="mt-[7px] flex h-[22px] items-center gap-[7px] pl-[4px]"><i className="size-[13px] rounded-full border border-[#767676]" /><GitPullRequest size={17} color="#6a737d" strokeWidth={2.600} /><span>Create a <b className="font-semibold">new branch</b> for this commit and start a pull request. <span className="text-[#0366d6]">Learn more about pull requests.</span></span></div>
              </div>
            </div>
            <div className="mt-[8px] flex shrink-0 gap-[4px] pl-[64px]">
              <span className="flex h-[34px] w-[132px] items-center justify-center rounded-[3px] border border-[#27933f] bg-linear-to-b from-[#34d058] to-[#28a745] font-semibold tracking-[-0.700px] text-white">Commit changes</span>
              <span className="flex h-[34px] w-[68px] items-center justify-center rounded-[3px] border border-[#cdcfd1] bg-linear-to-b from-[#fafbfc] to-[#eff3f6] text-[#cb2431]">Cancel</span>
            </div>
            <div className="mt-[39px] h-px w-[980px] shrink-0 bg-[#e1e4e8]" />
          </main>
          <div className="flex w-[17px] flex-col items-center bg-[#f1f1f1]"><Tri className="mt-[7px] rotate-180 text-[#444]" /><i className="mt-[291px] h-[507px] w-[13px] bg-[#c1c1c1]" /><Tri className="mt-auto mb-[8px] text-[#444]" /></div>
        </div>
        <div className="flex h-[49px] shrink-0 items-center border-t border-[#d0d0d0] pl-[20px] text-[12px] text-[#444]">
          <Chrome className="size-[15px]" /><span className="ml-[14px] w-[157px]">Upload files - Perf....html</span>
          <svg viewBox="0 0 12 8" className="h-[7px] w-[11px]"><path d="m1 7 5-5 5 5" fill="none" stroke="#666" strokeWidth="2" /></svg><i className="ml-[18px] h-[36px] w-px bg-[#ccc]" />
          <span className="mr-[12px] ml-auto flex h-[31px] w-[77px] items-center justify-center rounded-[4px] border border-[#d5d7da]">Show all</span><b className="mr-[12px] text-[14px] text-[#666]">✕</b>
        </div>
      </div>
      <footer className="absolute top-[1202px] left-0 flex h-[40px] w-full items-center gap-[4px] border-t border-[#51677c] bg-[#8ba5c0] pl-[9px] text-white">
        <Orb /><i className="w-[17px]" /><AppsGrid className="h-[31px] w-[30px]" /><i className="w-[7px]" />
        <TaskButton a="chrome" t="Go..." w="w-[77px]" /><i className="w-[2px]" /><TaskButton a="sticky" t="Stick..." w="w-[85px]" /><TaskButton a="discord" t="Disco..." w="w-[85px]" /><TaskButton a="gem" t="Peer..." w="w-[85px]" />
        <TaskButton a="media" t="Adob..." w="w-[84px]" /><TaskButton a="firefox" t="Voic..." w="w-[84px]" /><TaskButton a="pr" t="Ado..." w="w-[83px]" /><TaskButton a="pc" t="Com..." w="w-[84px]" /><TaskButton a="notepad" t="Not..." w="w-[76px]" /><i className="w-[2px]" />
        <TaskButton a="calc" t="Calc..." w="w-[84px]" /><TaskButton a="files" t="Win..." w="w-[79px]" /><i /><TaskButton a="vmware" t="Win_..." w="w-[84px]" /><TaskButton a="paint" t="Paint" w="w-[77px]" />
        <i className="h-full w-px bg-[#5b7389]" /><span className="ml-[9px]">Desktop</span><span className="mb-[14px] ml-[4px]">»</span>
        <div className="ml-[6px] flex items-center gap-[8px]">
          <FaDiscord size={16} /><FaBluetoothB size={16} color="#0b3a8a" /><Sq className="border border-white/70">⚿</Sq><FaSteam size={16} color="#14315a" /><Sq className="bg-[#b3151c] text-[8px]">APH</Sq><Sq className="text-[#c22]">✖</Sq><Icon k="pc" className={cdoc} /><Sq className="rounded-[2px] bg-[#222] text-[#76b900]">◉</Sq><Sq className="text-[14px]">⛵</Sq><Sq className="rounded-full bg-[#0a2a55] text-[#6cf]">◎</Sq><Sq className="rounded-full bg-[#3a9a3a]">✓</Sq><Sq className="rounded-full bg-[#9fb3bd]">●</Sq><Sq className="border border-[#222] bg-[#3a4]">▸</Sq><Sq className="bg-[#0c5a1c] text-[#3f6]">▦</Sq><Sq className="rounded-full bg-[#3fa0e0]">◌</Sq><Sq className="text-[#111]">◣</Sq><Sq className="text-[15px] text-[#f58a1f]">ϟ</Sq><Sq className="text-[#fff]">⚑</Sq><Sq className="rounded-[4px] bg-[#e01a1a]" /><Icon k="pc" className={cdoc} />
          <svg viewBox="0 0 16 16" className="size-[16px]"><path d="M1 5h3l4-3v12l-4-3H1z" fill="#fff" /><path d="M10 5c2 2 2 4 0 6M12.500 3c3 3 3 7 0 10" stroke="#fff" fill="none" /></svg>
        </div>
        <div className="mr-[6px] ml-auto flex flex-col items-center leading-[17px]"><span>10:19 AM</span><span>6/15/2020</span></div><i className="h-full w-[14px] border-l border-[#4d6377] bg-white/30" />
      </footer>
    </div>
  );
}

/* ---------- right monitor ---------- */

const procs: [string, string, string, string][] = [
  ["firefox.exe", "17640", "59,804 K", "Firefox"], ["chrome.exe", "17600", "127,332 K", "Google Chrome"], ["chrome.exe", "17552", "46,008 K", "Google Chrome"],
  ["chrome.exe", "17328", "18,372 K", "Google Chrome"], ["chrome.exe", "17316", "117,728 K", "Google Chrome"], ["chrome.exe", "17248", "694,536 K", "Google Chrome"],
  ["chrome.exe", "17084", "62,028 K", "Google Chrome"], ["firefox.exe", "17080", "36,704 K", "Firefox"], ["vmware-vmx.exe", "17028", "104,796 K", "VMware Workstation VMX"],
  ["vprintproxy.exe *32", "16912", "5,752 K", "VMware VPrint Proxy"], ["notepad.exe", "16900", "2,876 K", "Notepad"],
];

function RightMonitor() {
  const codeLines = ['l for="c', "     Com", "   </lab", 't id="co', 'l for="c', "     Opt", "   </lab", "area id=", 'class="f'];
  return (
    <div className="absolute top-0 left-[4480px] h-[1440px] w-[1280px] overflow-hidden bg-black">
      <div className="absolute top-[218px] left-0 h-[984px] w-full bg-white" />
      {/* picture editor strip at the right edge */}
      <div className="absolute top-[218px] left-[1130px] flex h-[984px] w-[150px] flex-col">
        <div className="flex h-[22px] shrink-0 justify-end bg-linear-to-r from-[#7fe0ee] to-[#b8f4f8] pr-[4px]"><Caption /></div>
        <div className="flex h-[24px] shrink-0 items-center justify-end border-y border-[#b7c7da] bg-[#dfe9f5] pr-[3px]"><HelpDot /></div>
        <div className="h-[92px] shrink-0 border-b-[5px] border-[#b9c8de] bg-linear-to-b from-[#eef4fb] to-[#dbe6f5]" />
        <div className="flex h-[105px] shrink-0">
          <div className="flex flex-1 flex-col overflow-hidden border-t-[5px] border-black bg-white">
            <div className="flex h-[34px] shrink-0 items-center bg-[#dfe4e8] pl-[9px] text-[12.500px] tracking-[-0.500px] text-[#777]">Pal Pre <b className="ml-[8px] text-[#555]">✕</b><i className="mx-[9px] h-[20px] w-px bg-[#888]" /><FaFacebook size={16} color="#1877f2" className="mr-[6px] shrink-0" />(2)</div>
            <div className="mt-[4px] h-[28px] shrink-0 bg-[#f1f3f4]" />
            <div className="flex flex-1 items-center gap-[16px] pl-[12px]"><Sq className="text-[16px] text-[#1c84d8]">❖</Sq><Sq className="rounded-[3px] bg-[#1c57a6]">G</Sq><Sq className="rounded-[3px] bg-[#f26b2a]">N</Sq><Sq className="text-[16px] text-[#e50914]">N</Sq></div>
          </div>
          <VScroll thumb="h-[90px] flex-none" />
        </div>
        <div className="flex h-[30px] shrink-0 justify-end overflow-hidden border-y border-[#556] bg-linear-to-r from-white to-[#e2fbff]"><Caption className="-mr-[18px]" /></div>
        <div className="h-[19px] shrink-0 bg-linear-to-b from-white to-[#d8dcf0]" />
        <div className="h-[27px] shrink-0 border-y border-[#999] bg-[#f0f0f0]" />
        <div className="mt-[17px] mr-[5px] flex h-[176px] shrink-0 border-t border-r border-[#777]"><div className="flex-1"><div className="h-[24px] border-b border-[#ddd] bg-linear-to-b from-white to-[#f1f2f4]" /></div><VScroll thumb="h-[133px] flex-none" /></div>
        <div className="mr-[5px] flex flex-1 justify-end border-r border-[#777]"><i className="w-[15px] bg-[#f0f0f0]" /></div>
      </div>
      {/* developer tools strip */}
      <div className={`absolute top-[1010px] left-0 flex h-[192px] w-[56px] flex-col overflow-hidden border-l-4 border-[#cfdff2] bg-white text-[#a0208a] ${code}`}>
        <div className="pt-[9px]">{codeLines.map((l, i) => <div key={i} className={`h-[16.500px] whitespace-pre ${i === 3 ? "bg-[#dadada]" : i === 7 ? "bg-[#e8effc]" : ""} ${i === 1 || i === 5 ? "text-[#333]" : ""}`}>{l}</div>)}</div>
        <div className="absolute top-[151px] left-0 h-[16px] w-full overflow-hidden bg-[#f0f0f0]"><HScroll thumb="w-[60px] flex-none" /></div>
        <div className="absolute top-[167px] left-0 h-[25px] w-full border-t border-[#999] bg-[#f1eeee] pl-[2px] text-[#333]">✢</div>
      </div>
      {/* process list */}
      <div className="absolute top-[1010px] left-[54px] flex h-[192px] w-[1200px] border-l-[7px] border-[#d3eaf5] bg-white outline outline-[#556]">
        <div className="ml-[21px] flex flex-col overflow-hidden border-l border-[#888] pt-[14px]">
          {procs.map((p) => (
            <div key={p[1]} className="grid h-[17px] shrink-0 grid-cols-[237px_50px_207px_32px_80px_361px] text-[11px]">
              <span className="border-r border-[#e6eef6] pl-[7px]">{p[0]}</span><span className="border-r border-[#e6eef6] pr-[13px] text-right">{p[1]}</span><span className="border-r border-[#e6eef6] pl-[7px]">Joseph</span>
              <span className="border-r border-[#e6eef6] pl-[8px]">00</span><span className="border-r border-[#e6eef6] pr-[8px] text-right">{p[2]}</span><span className="border-r border-[#e6eef6] pl-[6px]">{p[3]}</span>
            </div>
          ))}
        </div>
      </div>

      <Explorer
        className="top-[218px] left-[1px] h-[804px] w-[1137px] bg-[#e3f6fc]" caption="dark"
        back={
          <div className="absolute inset-x-0 top-0 h-[66px] overflow-hidden bg-[linear-gradient(180deg,#8aa3b5_0%,#3f566b_20%,#5b7286_32%,#c9f4fb_52%,#d8faff_100%)]">
            <div className="flex gap-[165px] pt-[9px] pl-[200px] blur-[3px]">{[0, 1, 2, 3, 4].map((i) => <i key={i} className="size-[14px] shrink-0 rounded-full bg-[#b84a50]" />)}</div>
            <div className="mt-[33px] ml-[672px] flex gap-[6px] blur-[2px]"><i className="mr-[46px] h-[8px] w-[30px] bg-black" /><i className="h-[8px] w-[15px] bg-[#111]" /><i className="h-[8px] w-[15px] bg-[#7f8fa8]" /><i className="h-[8px] w-[15px] bg-[#880015]" /><i className="h-[8px] w-[15px] bg-[#e02330]" /><i className="h-[8px] w-[15px] bg-[#f78f4a]" /><i className="h-[8px] w-[15px] bg-[#fbf04a]" /><i className="h-[8px] w-[15px] bg-[#2fb866]" /><i className="h-[8px] w-[15px] bg-[#18a3ea]" /><i className="h-[8px] w-[15px] bg-[#3f48cc]" /><i className="h-[8px] w-[15px] bg-[#a349a4]" /></div>
          </div>
        }
        crumbs={["Computer", "Storage (V:)"]} drive="drive" search="Search Storage (V:)" searchW="w-[190px]"
        tools={<><Tool>Organize <Tri /></Tool><Tool><Icon k="lib" />Open</Tool><Tool>Include in library <Tri /></Tool><Tool>Share with <Tri /></Tool><Tool>New folder</Tool></>}
        nav={<div className="flex w-[352px] shrink-0 border-r border-[#d6e5f5]"><div className="flex-1 overflow-hidden pt-px"><NavList items={deepNav} selected="Storage (V:)" /></div>
          <div className="flex w-[15px] flex-col items-center bg-[#f0f0f0]"><Tri className="mt-[7px] rotate-180 text-[#444]" /><i className="mt-[102px] h-[444px] w-[15px] rounded-[2px] border border-[#8e8e8e] bg-linear-to-r from-[#f4f4f4] to-[#cfcfd1]" /><Tri className="mt-auto mb-[6px] text-[#444]" /></div></div>}
        body={<><FileList rows={storageRows} selected={["O_DRIVE"]} head="ml-[11px] grid-cols-[264px_120px_120px_81px]" widths="ml-[13px]" cols="w-[573px] grid-cols-[266px_120px_120px_66px]" /><VScroll thumb="h-[535px] flex-none" /></>}
        details={<><BigFolder dark /><div className="pt-[6px] pl-[18px] leading-[18px]"><p><span className="text-[13px]">O_DRIVE</span> <span className="text-[#5a6779]">&nbsp;Date modified:</span> <span className="text-[#1e395b]">2/21/2018 7:52 PM</span></p><p className="text-[#5a6779]">File folder</p></div></>}
      />

      <footer className="absolute top-[1202px] left-0 flex h-[40px] w-full items-center gap-[3px] border-t border-[#51677c] bg-[#7f9ab6] pl-[2px]">
        {([["winamp", "1...."], ["drive", "Fi..."], ["notepad", "U..."], ["chrome", "C..."], ["chrome", "T..."], ["chrome", "H..."], ["folder", "!C..."], ["chrome", "St..."], ["chrome", "N..."], ["chrome", "Is ..."], ["notepad", "N..."], ["folder", "N..."], ["drive", "E..."], ["paint", "U..."], ["drive", "St..."], ["taskmgr", "W..."]] as [App, string][]).map(([a, t], i) => (
          <TaskButton key={i} a={a} t={t} w="w-[75px]" />
        ))}
      </footer>
    </div>
  );
}

export default function App() {
  return (
    <div className="h-[1024px] w-[4096px] overflow-hidden bg-black">
      <div className="relative h-[1440px] w-[5760px] overflow-hidden font-['Open_Sans',sans-serif] text-[12px] leading-[16px] tracking-[-0.350px] whitespace-nowrap text-black [zoom:0.711111]">
        <LeftMonitor />
        <MiddleMonitor />
        <RightMonitor />
      </div>
    </div>
  );
}
